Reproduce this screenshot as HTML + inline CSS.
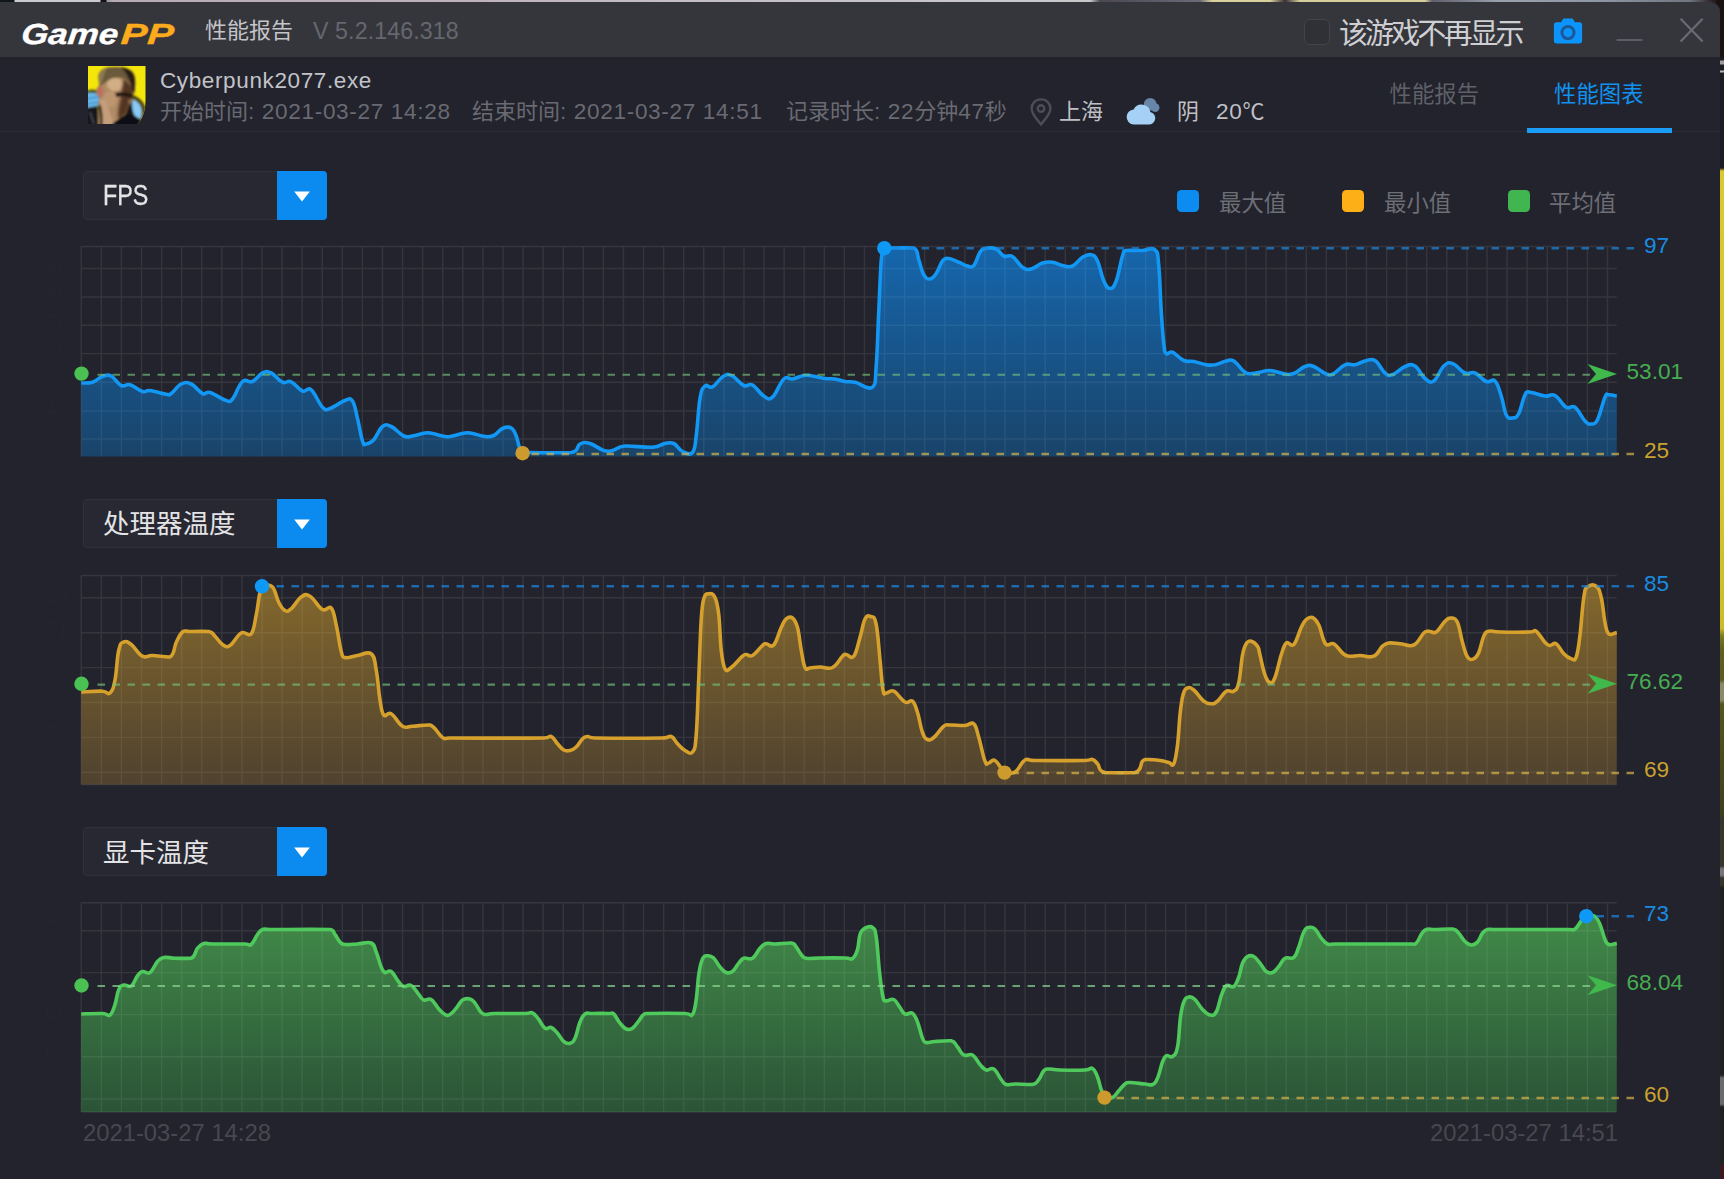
<!DOCTYPE html>
<html lang="zh-CN">
<head>
<meta charset="utf-8">
<title>GamePP 性能报告</title>
<style>
html,body{margin:0;padding:0}
body{width:1724px;height:1179px;overflow:hidden;position:relative;background:#15151a;font-family:"Liberation Sans","Noto Sans CJK SC",sans-serif;color:#c9c9ce}
#desk-top{position:absolute;left:0;top:0;width:1724px;height:3px;background:linear-gradient(90deg,#101518 0,#101518 14px,#cbcbcf 15px,#cbcbcf 100px,#121215 101px,#121215 106px,#9a979d 107px,#b9abb5 113px,#bdb0ba 420px,#c4bfc6 700px,#c9c9cc 1090px,#4a4750 1100px,#6b6a78 1200px,#d9d19c 1212px,#d9d19c 1270px,#3a3036 1285px,#d6ce9a 1300px,#d6ce9a 1425px,#60606c 1432px,#9aa1ad 1500px,#8e97a4 1600px,#70757f 1690px,#2a2225 1712px,#1a1113 1724px)}
#desk-right{position:absolute;left:1716px;top:0;width:8px;height:1179px;background:linear-gradient(180deg,#1a1113 0,#1a1113 56px,#1b1b20 58px,#1b1b20 60px,#9c9ca2 61px,#9c9ca2 64px,#1c1d22 65px,#1c1d22 70px,#b5b5ba 71px,#b5b5ba 72px,#1c1d22 73px,#1c1d22 168px,#d9c82f 171px,#d6c52e 480px,#cdbb2c 628px,#7a7a22 636px,#5e5e20 650px,#5c5c22 680px,#8a8a6a 684px,#8a8a6a 700px,#55551f 704px,#3f3f1e 814px,#36362c 820px,#36362c 866px,#77777a 869px,#77777a 875px,#36362c 878px,#34342c 885px,#1f2020 888px,#1f2020 1075px,#6a6a6e 1078px,#6a6a6e 1104px,#1f2020 1107px,#1f2020 1163px,#3a1a1e 1166px,#3a1a1e 1179px)}
#win{position:absolute;left:0;top:3px;width:1720px;height:1176px;background:#22232c;border-top-right-radius:9px;overflow:hidden;box-shadow:0 -1px 0 #35363b}
#tb{position:absolute;left:0;top:0;width:1720px;height:54px;background:#35363b}
.abs{position:absolute;white-space:nowrap;line-height:1}
#logo{left:0;top:0;font-size:29px;font-weight:bold;font-style:italic;color:#fff;-webkit-text-stroke:.4px}
#logo span,#logo b{position:absolute;top:17px;line-height:1;transform-origin:0 100%}
#logo span{left:19.8px;transform:scaleX(1.2) skewX(-5deg)}
#logo b{left:119.8px;color:#fcab1c;transform:scaleX(1.37) skewX(-3deg)}
#ttl{left:205px;top:17.3px;font-size:22px;color:#c4c4c9;font-weight:400}
#ver{left:313px;top:16.6px;font-size:23.2px;letter-spacing:.1px;color:#66676e}
#chk{position:absolute;left:1304px;top:16px;width:24px;height:24px;border:1px solid #434449;border-radius:6px;background:#303136}
#nomore{left:1339px;top:17.2px;font-size:29px;letter-spacing:-2.9px;color:#cfcfd3;font-weight:400}
#hdrline{position:absolute;left:0;top:128px;width:1720px;height:1px;background:#2b2c36}
#gname{left:160px;top:66.7px;font-size:22.5px;letter-spacing:.62px;color:#c2c3c8}
.meta{top:98.4px;font-size:22px;color:#696a72;font-weight:400}
.meta i{font-style:normal;font-size:22.6px;letter-spacing:.65px}
.lite{color:#bfc0c5}
#tab1{left:1389.500px;top:81px;font-size:22.4px;color:#5f6068;font-weight:400}
#tab2{left:1554px;top:81px;font-size:22.4px;color:#1192f0;font-weight:400}
#tabline{z-index:3;position:absolute;left:1527px;top:125px;width:145px;height:4.500px;background:#1a9cf8}
.sel{position:absolute;left:83px;width:242px;height:47px;border:1px solid #2f3039;border-radius:4px;background:#272831}
.seltxt{position:absolute;left:19px;top:8.5px;font-size:29.5px;line-height:1;color:#e4e4e7;white-space:nowrap;transform-origin:0 50%;transform:scaleX(.79);-webkit-text-stroke:.3px}
.seltxt.cjk{font-size:26.5px;top:11.5px;font-weight:400;transform:none;-webkit-text-stroke:0}
.selbtn{position:absolute;left:193px;top:-1px;width:50px;height:49px;background:#0b8bef;border-radius:0 4px 4px 0}
.selbtn svg{position:absolute;left:0;top:0}
.lg{position:absolute;width:22px;height:22px;border-radius:4.5px;top:187px}
.lgt{top:190.2px;font-size:22.4px;color:#6d6e76;font-weight:400}
#charts{position:absolute;left:0;top:0}
#charts .grid{fill:none;stroke:rgba(255,255,255,0.088);stroke-width:1.4}
#charts .grid2{fill:none;stroke:rgba(255,255,255,0.06);stroke-width:1.4}
#charts .dash{fill:none;stroke-width:2.4;stroke-dasharray:7.5 7.5;stroke-opacity:.72}
#charts text{font-family:"Liberation Sans","Noto Sans CJK SC",sans-serif}
#charts .yl{font-size:22px;fill:#24252e;text-anchor:end}
#charts .vl{font-size:22.6px}
#charts .dl{font-size:23.8px;fill:#474851}
</style>
</head>
<body>
<div id="desk-top"></div>
<div id="desk-right"></div>
<div id="win">
<div id="tb">
<div id="logo" class="abs"><span>Game</span><b>PP</b></div>
<div id="ttl" class="abs">性能报告</div>
<div id="ver" class="abs">V 5.2.146.318</div>
<div id="chk"></div>
<div id="nomore" class="abs">该游戏不再显示</div>
<svg class="abs" style="left:1553px;top:14px" width="30" height="28" viewBox="0 0 30 28"><path d="M10.400 1.500h9.200l2.300 3.700h4.500a2.700 2.700 0 0 1 2.700 2.700v15.800a2.700 2.700 0 0 1-2.700 2.700H3.600A2.700 2.700 0 0 1 .9 23.700V7.900a2.700 2.700 0 0 1 2.700-2.700h4.500z" fill="#0c94fd"/><circle cx="15" cy="15.600" r="6.100" fill="none" stroke="#1d5896" stroke-width="3"/></svg>
<svg class="abs" style="left:1615px;top:33px" width="30" height="8" viewBox="0 0 30 8"><path d="M1.500 4H27.500" stroke="#5c5d64" stroke-width="1.800"/></svg>
<svg class="abs" style="left:1678px;top:14px" width="28" height="28" viewBox="0 0 28 28"><path d="M2.600 1.800L24.600 24.600M24.600 1.800L2.600 24.600" stroke="#6b6a72" stroke-width="2.200" fill="none"/></svg>
</div>
<svg class="abs" style="left:88px;top:63.3px" width="58" height="58" viewBox="0 0 58 58">
<defs><clipPath id="icp"><path d="M0 0H57.500V34C57.500 44 55 52 49.500 58H0Z"/></clipPath><filter id="ibl" x="-10%" y="-10%" width="120%" height="120%"><feGaussianBlur stdDeviation="1.05"/></filter></defs>
<g clip-path="url(#icp)">
<rect x="-2" y="-2" width="62" height="62" fill="#f4e60a"/>
<g filter="url(#ibl)">
<path d="M44 29C50 30.500 55 35 57.500 42L60 60H40Z" fill="#6a5a1c"/>
<path d="M-2 25C3 22.500 8 23 12 26.500L12 40L-2 44Z" fill="#4a5222"/>
<path d="M-2 27.500C3 26 7 26.500 10.300 29C11.500 32.500 11 36.500 9 41L-2 43.500Z" fill="#6cb9e8"/>
<path d="M-2 33L11 30.500M-2 38.500L10 36" stroke="#3f92cc" stroke-width="1.500" fill="none"/>
<path d="M-2 42L9 40C10.500 45 11 52 10.500 60H-2Z" fill="#17171d"/>
<path d="M2 46L6 58" stroke="#4a4a52" stroke-width="1.600" fill="none"/>
<path d="M10.500 12C10 6 14 2.500 20 1.500C28 .3 38 1 43 4.500C46.500 7.500 47.500 13 47.200 19C47 23 46.600 25 46.400 26L44 31L42.700 34.800L43.500 37L41 39.500L40.300 41L39.500 44.500L38 48L34 51L29 53.500L27 60H10.300V40L11.500 31L8.400 28V22L11 20Z" fill="#b08b66"/>
<path d="M10.500 12C10 6 14 2.500 20 1.500C28 .3 38 1 43 4.500C46.500 7.500 47.500 13 47.200 19L46.400 26C45 20 42 15 36 12.500C30 10.500 24 11.500 19 15C15.500 18 13 20 11.500 21.500Z" fill="#6b5a3a"/>
<path d="M11 11C11 6.500 14 3 19 1.800C17 6 15 11 13.500 17.500L11.500 21Z" fill="#8f7a54"/>
<path d="M33 1.500C38 1.500 43 4 45.500 8C47.500 12 47.500 19 46.400 26L43.500 24C43 17 40 8 33 1.500Z" fill="#2c1e17"/>
<ellipse cx="27" cy="18.500" rx="8" ry="6.500" fill="#d2ae84"/>
<ellipse cx="22" cy="33" rx="7" ry="8" fill="#bd9670"/>
<path filter="url(#ibl)" d="M36 13C40 15 44 20 46 26L44 31L42.700 34.800L43.500 37L41 39.500L40.300 41L39.500 44.500L38 48L34 51L30 53C29.500 46 31 38 33 31C33.500 25 34.500 18 36 13Z" fill="#432719" fill-opacity=".85"/>
<path d="M27 27C32 25.500 38 26 44.800 28.500L44 32C39 30 33 30 28.500 31Z" fill="#22160f"/>
<path d="M40 33.500L43 34.500L43.600 37L41.200 38.500Z" fill="#9a7050"/>
<ellipse cx="12" cy="25.500" rx="3.400" ry="5.200" fill="#bb705b"/>
<path d="M11.500 33C13 40 13.500 48 13 60H26C24 50 20 41 17.500 34Z" fill="#c49e7a"/>
<path d="M9.800 40C11.500 46 12.300 52 12 60H14.500C15 52 14.500 45 12.800 39Z" fill="#33261f"/>
<path d="M23 60C26 55.500 32 52 37 49L41 44.500L44 41L46 49L53 54L52 60Z" fill="#0f0f15"/>
<path d="M40.500 40.500L44.500 35L47 50L38 48.500Z" fill="#151218"/>
<path d="M44.500 33.500C48.500 34.500 52 38 53.300 43C54 47 53.500 50 52 53L46.500 49.500C44.300 45 43.600 39 44.500 33.500Z" fill="#88caf5"/>
<path d="M44.500 30.500C50 32 55 36.500 56.500 43C57.500 48 56 54 52 59" fill="none" stroke="#3a3416" stroke-width="2"/>
</g></g></svg>
<div id="gname" class="abs">Cyberpunk2077.exe</div>
<div class="abs meta" style="left:160px" id="m1">开始时间<i>: 2021-03-27 14:28</i></div>
<div class="abs meta" style="left:472px" id="m2">结束时间<i>: 2021-03-27 14:51</i></div>
<div class="abs meta" style="left:786px" id="m3">记录时长<i>: 22</i>分钟<i>47</i>秒</div>
<svg class="abs" style="left:1029px;top:94px" width="24" height="30" viewBox="0 0 24 30"><path d="M12 2.400C6.300 2.400 2.600 6.400 2.600 11.400C2.600 17.500 8.600 22.600 12 27.600C15.400 22.600 21.400 17.500 21.400 11.400C21.400 6.400 17.700 2.400 12 2.400Z" fill="none" stroke="#4c4d56" stroke-width="2.400" stroke-linejoin="round"/><circle cx="12" cy="11.600" r="3.300" fill="none" stroke="#4c4d56" stroke-width="2.400"/></svg>
<div class="abs meta lite" style="left:1059px" id="m4">上海</div>
<svg class="abs" style="left:1124px;top:91px" width="38" height="34" viewBox="0 0 38 34"><circle cx="26.200" cy="10.200" r="6.300" fill="#6887a8"/><circle cx="31.200" cy="13.600" r="4.300" fill="#6887a8"/><path d="M9.200 30.500H24.800A6.400 6.400 0 0 0 26.400 17.900A9 9 0 0 0 9.600 15.400A7.600 7.600 0 0 0 9.200 30.500Z" fill="#a5d1f7"/></svg>
<div class="abs meta lite" style="left:1177px" id="m5">阴</div>
<div class="abs meta lite" style="left:1216px" id="m6"><i>20</i>℃</div>
<div id="tab1" class="abs">性能报告</div>
<div id="tab2" class="abs">性能图表</div>
<div id="tabline"></div>
<div id="hdrline"></div>
<div class="sel" style="top:167.5px"><span class="seltxt ">FPS</span><span class="selbtn"><svg width="50" height="50" viewBox="0 0 50 50"><path d="M17.2 20.6H32.8L25 30.6Z" fill="#fff"/></svg></span></div>
<div class="sel" style="top:495.6px"><span class="seltxt cjk">处理器温度</span><span class="selbtn"><svg width="50" height="50" viewBox="0 0 50 50"><path d="M17.2 20.6H32.8L25 30.6Z" fill="#fff"/></svg></span></div>
<div class="sel" style="top:824.2px"><span class="seltxt cjk">显卡温度</span><span class="selbtn"><svg width="50" height="50" viewBox="0 0 50 50"><path d="M17.2 20.6H32.8L25 30.6Z" fill="#fff"/></svg></span></div>
<div class="lg" style="left:1177px;background:#0c8cf0"></div><div class="abs lgt" style="left:1219px">最大值</div>
<div class="lg" style="left:1342px;background:#fcaf17"></div><div class="abs lgt" style="left:1384px">最小值</div>
<div class="lg" style="left:1508px;background:#41b650"></div><div class="abs lgt" style="left:1549px">平均值</div>
</div>
<svg id="charts" width="1724" height="1179" viewBox="0 0 1724 1179">
<defs>
<linearGradient id="gc1" x1="0" y1="0" x2="0" y2="1"><stop offset="0" stop-color="#146ebb" stop-opacity="0.9"/><stop offset="1" stop-color="#184872" stop-opacity="0.88"/></linearGradient>
<linearGradient id="gc2" x1="0" y1="0" x2="0" y2="1"><stop offset="0" stop-color="#8e6f2c" stop-opacity="0.9"/><stop offset="1" stop-color="#55462f" stop-opacity="0.88"/></linearGradient>
<linearGradient id="gc3" x1="0" y1="0" x2="0" y2="1"><stop offset="0" stop-color="#45964c" stop-opacity="0.9"/><stop offset="1" stop-color="#2c5a38" stop-opacity="0.88"/></linearGradient>
</defs>
<g class="chart" id="c1">
<text class="yl" x="69" y="273.0">90</text>
<text class="yl" x="69" y="301.5">80</text>
<text class="yl" x="69" y="329.7">70</text>
<text class="yl" x="69" y="358.1">60</text>
<text class="yl" x="69" y="386.7">50</text>
<text class="yl" x="69" y="415.5">40</text>
<text class="yl" x="69" y="443.5">30</text>
<path class="grid" d="M81.25 246.5V456.5M101.33 246.5V456.5M121.41 246.5V456.5M141.50 246.5V456.5M161.58 246.5V456.5M181.66 246.5V456.5M201.74 246.5V456.5M221.82 246.5V456.5M241.91 246.5V456.5M261.99 246.5V456.5M282.07 246.5V456.5M302.15 246.5V456.5M322.23 246.5V456.5M342.32 246.5V456.5M362.40 246.5V456.5M382.48 246.5V456.5M402.56 246.5V456.5M422.64 246.5V456.5M442.73 246.5V456.5M462.81 246.5V456.5M482.89 246.5V456.5M502.97 246.5V456.5M523.05 246.5V456.5M543.14 246.5V456.5M563.22 246.5V456.5M583.30 246.5V456.5M603.38 246.5V456.5M623.46 246.5V456.5M643.55 246.5V456.5M663.63 246.5V456.5M683.71 246.5V456.5M703.79 246.5V456.5M723.87 246.5V456.5M743.96 246.5V456.5M764.04 246.5V456.5M784.12 246.5V456.5M804.20 246.5V456.5M824.28 246.5V456.5M844.37 246.5V456.5M864.45 246.5V456.5M884.53 246.5V456.5M904.61 246.5V456.5M924.69 246.5V456.5M944.78 246.5V456.5M964.86 246.5V456.5M984.94 246.5V456.5M1005.02 246.5V456.5M1025.10 246.5V456.5M1045.19 246.5V456.5M1065.27 246.5V456.5M1085.35 246.5V456.5M1105.43 246.5V456.5M1125.51 246.5V456.5M1145.60 246.5V456.5M1165.68 246.5V456.5M1185.76 246.5V456.5M1205.84 246.5V456.5M1225.92 246.5V456.5M1246.01 246.5V456.5M1266.09 246.5V456.5M1286.17 246.5V456.5M1306.25 246.5V456.5M1326.33 246.5V456.5M1346.42 246.5V456.5M1366.50 246.5V456.5M1386.58 246.5V456.5M1406.66 246.5V456.5M1426.74 246.5V456.5M1446.83 246.5V456.5M1466.91 246.5V456.5M1486.99 246.5V456.5M1507.07 246.5V456.5M1527.15 246.5V456.5M1547.24 246.5V456.5M1567.32 246.5V456.5M1587.40 246.5V456.5M1607.48 246.5V456.5M81.25 246.50H1616.75M81.25 268.50H1616.75M81.25 297.00H1616.75M81.25 325.20H1616.75M81.25 353.60H1616.75M81.25 382.20H1616.75M81.25 411.00H1616.75M81.25 439.00H1616.75"/>
<clipPath id="cpc1"><path d="M81.2 383.0C83.6 382.8 88.1 383.6 92.5 382.2C96.9 380.9 98.6 377.8 102.5 376.5C106.4 375.2 107.4 374.1 111.2 376.0C115.1 377.9 117.4 383.7 121.2 385.5C125.1 387.3 125.6 383.5 130.0 384.8C134.4 386.0 138.4 390.3 142.5 391.5C146.6 392.7 145.1 389.9 150.0 390.5C154.9 391.1 161.9 393.6 166.2 394.2C170.6 394.9 168.2 395.6 171.2 393.5C174.3 391.4 177.1 386.0 181.2 384.0C185.4 382.0 186.9 382.0 191.2 384.0C195.6 386.0 198.6 391.7 202.5 393.5C206.4 395.3 205.1 391.1 210.0 392.5C214.9 393.9 221.6 399.2 226.2 400.5C230.9 401.8 229.1 402.9 232.5 399.0C235.9 395.1 238.4 385.1 242.5 381.5C246.6 377.9 248.4 383.3 252.5 381.5C256.6 379.7 258.6 374.8 262.5 373.0C266.4 371.2 267.1 371.1 271.2 373.0C275.4 374.9 278.4 380.4 282.5 382.2C286.6 384.1 287.1 379.9 291.2 381.8C295.4 383.6 298.4 389.3 302.5 391.0C306.6 392.7 307.1 386.4 311.2 389.8C315.4 393.1 318.6 403.4 322.5 407.2C326.4 411.1 325.4 409.9 330.0 408.5C334.6 407.1 340.4 402.1 345.0 400.5C349.6 398.9 349.9 397.3 352.5 401.0C355.1 404.7 355.4 410.2 357.5 418.5C359.6 426.8 360.7 435.7 362.5 441.0C364.3 446.3 363.9 444.3 366.2 444.0C368.6 443.7 370.4 443.4 373.8 439.8C377.1 436.1 378.9 429.2 382.5 426.5C386.1 423.8 386.9 424.5 391.2 426.5C395.6 428.5 399.4 434.0 403.8 436.0C408.1 438.0 408.1 436.6 412.5 436.0C416.9 435.4 420.9 433.5 425.0 433.0C429.1 432.5 428.4 432.8 432.5 433.5C436.6 434.2 440.9 436.0 445.0 436.5C449.1 437.0 448.4 436.7 452.5 436.0C456.6 435.3 460.9 433.5 465.0 433.0C469.1 432.5 468.4 432.8 472.5 433.5C476.6 434.2 480.6 436.1 485.0 436.5C489.4 436.9 490.1 437.2 493.8 435.5C497.4 433.8 498.9 430.1 502.5 428.5C506.1 426.9 508.4 426.4 511.2 428.0C514.1 429.6 514.2 431.2 516.2 436.0C518.3 440.8 518.4 447.6 521.2 451.0C524.1 454.4 521.2 452.2 530.0 452.5C540.3 452.8 560.9 452.8 571.2 452.5C580.0 450.7 576.1 445.9 580.0 444.0C583.9 442.1 585.1 442.2 590.0 443.5C594.9 444.8 599.1 449.1 603.8 450.5C608.4 451.9 608.1 451.4 612.5 450.5C616.9 449.6 616.7 446.7 625.0 446.0C633.3 445.7 644.2 447.6 652.5 447.2C660.8 446.7 660.6 444.3 665.0 443.5C669.4 442.7 670.1 441.8 673.8 443.5C677.4 445.2 678.6 449.6 682.5 451.5C686.4 453.4 689.7 455.7 692.5 452.5C695.3 449.3 694.7 447.2 696.2 436.0C697.8 424.8 698.2 408.8 700.0 398.5C701.8 388.2 702.4 388.4 705.0 386.0C707.6 383.6 708.6 388.8 712.5 386.8C716.4 384.7 719.6 378.2 723.8 376.0C727.9 373.8 728.4 374.0 732.5 376.0C736.6 378.0 739.6 383.6 743.8 385.5C747.9 387.4 748.4 382.8 752.5 385.0C756.6 387.2 759.6 393.5 763.8 396.0C767.9 398.5 768.4 400.8 772.5 397.2C776.6 393.7 779.6 382.8 783.8 379.0C787.9 375.2 788.4 379.7 792.5 379.0C796.6 378.3 799.6 376.1 803.8 375.5C807.9 374.9 808.1 375.4 812.5 376.0C816.9 376.6 820.4 377.9 825.0 378.5C829.6 379.1 830.9 378.4 835.0 379.0C839.1 379.6 840.9 380.8 845.0 381.5C849.1 382.2 849.3 381.1 855.0 382.2C860.7 383.4 868.1 390.6 872.5 387.2C876.2 383.9 875.0 381.8 876.2 366.0C877.5 350.2 877.7 332.7 878.8 311.0C879.8 289.3 880.2 274.0 881.2 261.0C882.3 248.0 883.0 250.7 883.8 248.0C884.5 245.3 883.8 248.0 885.0 248.0C891.2 248.0 906.8 247.7 913.8 248.0C918.8 250.4 916.7 254.2 918.8 259.8C920.8 265.3 921.4 270.8 923.8 274.8C926.1 278.7 927.4 279.3 930.0 279.0C932.6 278.7 933.7 277.2 936.2 273.5C938.8 269.8 939.9 264.1 942.5 261.0C945.1 257.9 945.4 258.2 948.8 258.5C952.1 258.8 954.9 260.7 958.8 262.2C962.6 263.8 964.4 265.3 967.5 266.0C970.6 266.7 971.2 268.3 973.8 265.5C976.3 262.7 977.7 255.8 980.0 252.2C982.3 248.7 981.6 249.2 985.0 248.5C988.4 247.8 992.4 247.4 996.2 249.0C1000.1 250.6 1000.4 254.4 1003.8 256.0C1007.1 257.6 1008.6 254.2 1012.5 256.5C1016.4 258.8 1018.6 264.7 1022.5 267.2C1026.4 269.8 1027.1 269.9 1031.2 269.0C1035.4 268.1 1038.1 264.4 1042.5 263.0C1046.9 261.6 1048.4 261.7 1052.5 262.2C1056.6 262.8 1058.4 264.7 1062.5 265.5C1066.6 266.3 1068.4 267.7 1072.5 266.0C1076.6 264.3 1078.6 259.6 1082.5 257.2C1086.4 254.9 1088.2 254.0 1091.2 254.8C1094.3 255.5 1094.9 255.6 1097.5 261.0C1100.1 266.4 1101.2 275.3 1103.8 281.0C1106.3 286.7 1107.4 288.5 1110.0 288.5C1112.6 288.5 1113.7 287.7 1116.2 281.0C1118.8 274.3 1120.4 262.3 1122.5 256.0C1124.6 249.7 1122.5 251.6 1126.2 250.5C1130.4 250.2 1136.6 250.7 1142.5 250.5C1148.4 250.3 1151.6 246.5 1155.0 249.8C1158.4 253.0 1157.5 253.3 1158.8 266.0C1160.0 278.7 1160.2 295.0 1161.2 311.0C1162.3 327.0 1162.7 334.7 1163.8 343.5C1164.8 352.3 1164.4 351.7 1166.2 353.5C1168.1 355.3 1168.9 350.8 1172.5 352.2C1176.1 353.7 1179.4 358.6 1183.8 360.5C1188.1 362.4 1189.1 360.6 1193.8 361.5C1198.4 362.4 1201.9 364.1 1206.2 364.8C1210.6 365.4 1210.9 365.5 1215.0 364.8C1219.1 364.0 1222.4 361.8 1226.2 361.0C1230.1 360.2 1229.9 358.7 1233.8 361.0C1237.6 363.3 1241.1 369.7 1245.0 372.2C1248.9 374.8 1249.4 373.5 1252.5 373.5C1255.6 373.5 1256.4 372.9 1260.0 372.2C1263.6 371.6 1264.8 370.1 1270.0 370.5C1275.2 370.9 1280.1 373.4 1285.0 374.0C1289.9 374.6 1289.6 375.1 1293.8 373.5C1297.9 371.9 1300.9 367.9 1305.0 366.5C1309.1 365.1 1309.4 364.9 1313.8 366.5C1318.1 368.1 1322.1 372.6 1326.2 374.0C1330.4 375.4 1329.9 375.4 1333.8 373.5C1337.6 371.6 1340.6 366.6 1345.0 364.8C1349.4 362.9 1350.9 365.5 1355.0 364.8C1359.1 364.0 1360.9 361.9 1365.0 361.0C1369.1 360.1 1370.9 358.0 1375.0 360.5C1379.1 363.0 1381.4 370.1 1385.0 373.0C1388.6 375.9 1388.4 376.1 1392.5 374.8C1396.6 373.4 1400.3 368.3 1405.0 366.5C1409.7 364.7 1410.9 363.5 1415.0 366.0C1419.1 368.5 1421.1 375.4 1425.0 378.5C1428.9 381.6 1429.9 383.6 1433.8 381.0C1437.6 378.4 1439.9 369.6 1443.8 366.0C1447.6 362.4 1448.1 362.1 1452.5 363.5C1456.9 364.9 1460.3 371.0 1465.0 373.0C1469.7 375.0 1470.6 371.2 1475.0 373.0C1479.4 374.8 1482.1 379.8 1486.2 381.5C1490.4 383.2 1491.9 378.0 1495.0 381.0C1498.1 384.0 1498.9 389.0 1501.2 396.0C1503.6 403.0 1503.9 410.2 1506.2 414.8C1508.6 419.3 1509.9 418.3 1512.5 418.0C1515.1 417.7 1516.2 418.3 1518.8 413.5C1521.3 408.7 1522.7 399.1 1525.0 394.8C1527.3 390.4 1525.9 392.0 1530.0 392.2C1534.1 392.5 1539.8 395.3 1545.0 396.0C1550.2 396.7 1550.6 393.2 1555.0 395.5C1559.4 397.8 1562.1 404.8 1566.2 407.2C1570.4 409.7 1571.1 404.4 1575.0 407.2C1578.9 410.1 1581.6 417.5 1585.0 421.0C1588.4 424.5 1588.7 424.3 1591.2 424.0C1593.8 423.7 1594.7 425.3 1597.5 419.8C1600.3 414.2 1602.7 402.4 1605.0 397.2C1607.3 392.1 1606.3 395.0 1608.8 394.8C1611.2 394.5 1615.1 395.7 1616.8 396.0L1616.75 456.5L81.25 456.5Z"/></clipPath>
<path d="M81.2 383.0C83.6 382.8 88.1 383.6 92.5 382.2C96.9 380.9 98.6 377.8 102.5 376.5C106.4 375.2 107.4 374.1 111.2 376.0C115.1 377.9 117.4 383.7 121.2 385.5C125.1 387.3 125.6 383.5 130.0 384.8C134.4 386.0 138.4 390.3 142.5 391.5C146.6 392.7 145.1 389.9 150.0 390.5C154.9 391.1 161.9 393.6 166.2 394.2C170.6 394.9 168.2 395.6 171.2 393.5C174.3 391.4 177.1 386.0 181.2 384.0C185.4 382.0 186.9 382.0 191.2 384.0C195.6 386.0 198.6 391.7 202.5 393.5C206.4 395.3 205.1 391.1 210.0 392.5C214.9 393.9 221.6 399.2 226.2 400.5C230.9 401.8 229.1 402.9 232.5 399.0C235.9 395.1 238.4 385.1 242.5 381.5C246.6 377.9 248.4 383.3 252.5 381.5C256.6 379.7 258.6 374.8 262.5 373.0C266.4 371.2 267.1 371.1 271.2 373.0C275.4 374.9 278.4 380.4 282.5 382.2C286.6 384.1 287.1 379.9 291.2 381.8C295.4 383.6 298.4 389.3 302.5 391.0C306.6 392.7 307.1 386.4 311.2 389.8C315.4 393.1 318.6 403.4 322.5 407.2C326.4 411.1 325.4 409.9 330.0 408.5C334.6 407.1 340.4 402.1 345.0 400.5C349.6 398.9 349.9 397.3 352.5 401.0C355.1 404.7 355.4 410.2 357.5 418.5C359.6 426.8 360.7 435.7 362.5 441.0C364.3 446.3 363.9 444.3 366.2 444.0C368.6 443.7 370.4 443.4 373.8 439.8C377.1 436.1 378.9 429.2 382.5 426.5C386.1 423.8 386.9 424.5 391.2 426.5C395.6 428.5 399.4 434.0 403.8 436.0C408.1 438.0 408.1 436.6 412.5 436.0C416.9 435.4 420.9 433.5 425.0 433.0C429.1 432.5 428.4 432.8 432.5 433.5C436.6 434.2 440.9 436.0 445.0 436.5C449.1 437.0 448.4 436.7 452.5 436.0C456.6 435.3 460.9 433.5 465.0 433.0C469.1 432.5 468.4 432.8 472.5 433.5C476.6 434.2 480.6 436.1 485.0 436.5C489.4 436.9 490.1 437.2 493.8 435.5C497.4 433.8 498.9 430.1 502.5 428.5C506.1 426.9 508.4 426.4 511.2 428.0C514.1 429.6 514.2 431.2 516.2 436.0C518.3 440.8 518.4 447.6 521.2 451.0C524.1 454.4 521.2 452.2 530.0 452.5C540.3 452.8 560.9 452.8 571.2 452.5C580.0 450.7 576.1 445.9 580.0 444.0C583.9 442.1 585.1 442.2 590.0 443.5C594.9 444.8 599.1 449.1 603.8 450.5C608.4 451.9 608.1 451.4 612.5 450.5C616.9 449.6 616.7 446.7 625.0 446.0C633.3 445.7 644.2 447.6 652.5 447.2C660.8 446.7 660.6 444.3 665.0 443.5C669.4 442.7 670.1 441.8 673.8 443.5C677.4 445.2 678.6 449.6 682.5 451.5C686.4 453.4 689.7 455.7 692.5 452.5C695.3 449.3 694.7 447.2 696.2 436.0C697.8 424.8 698.2 408.8 700.0 398.5C701.8 388.2 702.4 388.4 705.0 386.0C707.6 383.6 708.6 388.8 712.5 386.8C716.4 384.7 719.6 378.2 723.8 376.0C727.9 373.8 728.4 374.0 732.5 376.0C736.6 378.0 739.6 383.6 743.8 385.5C747.9 387.4 748.4 382.8 752.5 385.0C756.6 387.2 759.6 393.5 763.8 396.0C767.9 398.5 768.4 400.8 772.5 397.2C776.6 393.7 779.6 382.8 783.8 379.0C787.9 375.2 788.4 379.7 792.5 379.0C796.6 378.3 799.6 376.1 803.8 375.5C807.9 374.9 808.1 375.4 812.5 376.0C816.9 376.6 820.4 377.9 825.0 378.5C829.6 379.1 830.9 378.4 835.0 379.0C839.1 379.6 840.9 380.8 845.0 381.5C849.1 382.2 849.3 381.1 855.0 382.2C860.7 383.4 868.1 390.6 872.5 387.2C876.2 383.9 875.0 381.8 876.2 366.0C877.5 350.2 877.7 332.7 878.8 311.0C879.8 289.3 880.2 274.0 881.2 261.0C882.3 248.0 883.0 250.7 883.8 248.0C884.5 245.3 883.8 248.0 885.0 248.0C891.2 248.0 906.8 247.7 913.8 248.0C918.8 250.4 916.7 254.2 918.8 259.8C920.8 265.3 921.4 270.8 923.8 274.8C926.1 278.7 927.4 279.3 930.0 279.0C932.6 278.7 933.7 277.2 936.2 273.5C938.8 269.8 939.9 264.1 942.5 261.0C945.1 257.9 945.4 258.2 948.8 258.5C952.1 258.8 954.9 260.7 958.8 262.2C962.6 263.8 964.4 265.3 967.5 266.0C970.6 266.7 971.2 268.3 973.8 265.5C976.3 262.7 977.7 255.8 980.0 252.2C982.3 248.7 981.6 249.2 985.0 248.5C988.4 247.8 992.4 247.4 996.2 249.0C1000.1 250.6 1000.4 254.4 1003.8 256.0C1007.1 257.6 1008.6 254.2 1012.5 256.5C1016.4 258.8 1018.6 264.7 1022.5 267.2C1026.4 269.8 1027.1 269.9 1031.2 269.0C1035.4 268.1 1038.1 264.4 1042.5 263.0C1046.9 261.6 1048.4 261.7 1052.5 262.2C1056.6 262.8 1058.4 264.7 1062.5 265.5C1066.6 266.3 1068.4 267.7 1072.5 266.0C1076.6 264.3 1078.6 259.6 1082.5 257.2C1086.4 254.9 1088.2 254.0 1091.2 254.8C1094.3 255.5 1094.9 255.6 1097.5 261.0C1100.1 266.4 1101.2 275.3 1103.8 281.0C1106.3 286.7 1107.4 288.5 1110.0 288.5C1112.6 288.5 1113.7 287.7 1116.2 281.0C1118.8 274.3 1120.4 262.3 1122.5 256.0C1124.6 249.7 1122.5 251.6 1126.2 250.5C1130.4 250.2 1136.6 250.7 1142.5 250.5C1148.4 250.3 1151.6 246.5 1155.0 249.8C1158.4 253.0 1157.5 253.3 1158.8 266.0C1160.0 278.7 1160.2 295.0 1161.2 311.0C1162.3 327.0 1162.7 334.7 1163.8 343.5C1164.8 352.3 1164.4 351.7 1166.2 353.5C1168.1 355.3 1168.9 350.8 1172.5 352.2C1176.1 353.7 1179.4 358.6 1183.8 360.5C1188.1 362.4 1189.1 360.6 1193.8 361.5C1198.4 362.4 1201.9 364.1 1206.2 364.8C1210.6 365.4 1210.9 365.5 1215.0 364.8C1219.1 364.0 1222.4 361.8 1226.2 361.0C1230.1 360.2 1229.9 358.7 1233.8 361.0C1237.6 363.3 1241.1 369.7 1245.0 372.2C1248.9 374.8 1249.4 373.5 1252.5 373.5C1255.6 373.5 1256.4 372.9 1260.0 372.2C1263.6 371.6 1264.8 370.1 1270.0 370.5C1275.2 370.9 1280.1 373.4 1285.0 374.0C1289.9 374.6 1289.6 375.1 1293.8 373.5C1297.9 371.9 1300.9 367.9 1305.0 366.5C1309.1 365.1 1309.4 364.9 1313.8 366.5C1318.1 368.1 1322.1 372.6 1326.2 374.0C1330.4 375.4 1329.9 375.4 1333.8 373.5C1337.6 371.6 1340.6 366.6 1345.0 364.8C1349.4 362.9 1350.9 365.5 1355.0 364.8C1359.1 364.0 1360.9 361.9 1365.0 361.0C1369.1 360.1 1370.9 358.0 1375.0 360.5C1379.1 363.0 1381.4 370.1 1385.0 373.0C1388.6 375.9 1388.4 376.1 1392.5 374.8C1396.6 373.4 1400.3 368.3 1405.0 366.5C1409.7 364.7 1410.9 363.5 1415.0 366.0C1419.1 368.5 1421.1 375.4 1425.0 378.5C1428.9 381.6 1429.9 383.6 1433.8 381.0C1437.6 378.4 1439.9 369.6 1443.8 366.0C1447.6 362.4 1448.1 362.1 1452.5 363.5C1456.9 364.9 1460.3 371.0 1465.0 373.0C1469.7 375.0 1470.6 371.2 1475.0 373.0C1479.4 374.8 1482.1 379.8 1486.2 381.5C1490.4 383.2 1491.9 378.0 1495.0 381.0C1498.1 384.0 1498.9 389.0 1501.2 396.0C1503.6 403.0 1503.9 410.2 1506.2 414.8C1508.6 419.3 1509.9 418.3 1512.5 418.0C1515.1 417.7 1516.2 418.3 1518.8 413.5C1521.3 408.7 1522.7 399.1 1525.0 394.8C1527.3 390.4 1525.9 392.0 1530.0 392.2C1534.1 392.5 1539.8 395.3 1545.0 396.0C1550.2 396.7 1550.6 393.2 1555.0 395.5C1559.4 397.8 1562.1 404.8 1566.2 407.2C1570.4 409.7 1571.1 404.4 1575.0 407.2C1578.9 410.1 1581.6 417.5 1585.0 421.0C1588.4 424.5 1588.7 424.3 1591.2 424.0C1593.8 423.7 1594.7 425.3 1597.5 419.8C1600.3 414.2 1602.7 402.4 1605.0 397.2C1607.3 392.1 1606.3 395.0 1608.8 394.8C1611.2 394.5 1615.1 395.7 1616.8 396.0L1616.75 456.5L81.25 456.5Z" fill="url(#gc1)"/>
<path class="grid2" clip-path="url(#cpc1)" d="M81.25 246.5V456.5M101.33 246.5V456.5M121.41 246.5V456.5M141.50 246.5V456.5M161.58 246.5V456.5M181.66 246.5V456.5M201.74 246.5V456.5M221.82 246.5V456.5M241.91 246.5V456.5M261.99 246.5V456.5M282.07 246.5V456.5M302.15 246.5V456.5M322.23 246.5V456.5M342.32 246.5V456.5M362.40 246.5V456.5M382.48 246.5V456.5M402.56 246.5V456.5M422.64 246.5V456.5M442.73 246.5V456.5M462.81 246.5V456.5M482.89 246.5V456.5M502.97 246.5V456.5M523.05 246.5V456.5M543.14 246.5V456.5M563.22 246.5V456.5M583.30 246.5V456.5M603.38 246.5V456.5M623.46 246.5V456.5M643.55 246.5V456.5M663.63 246.5V456.5M683.71 246.5V456.5M703.79 246.5V456.5M723.87 246.5V456.5M743.96 246.5V456.5M764.04 246.5V456.5M784.12 246.5V456.5M804.20 246.5V456.5M824.28 246.5V456.5M844.37 246.5V456.5M864.45 246.5V456.5M884.53 246.5V456.5M904.61 246.5V456.5M924.69 246.5V456.5M944.78 246.5V456.5M964.86 246.5V456.5M984.94 246.5V456.5M1005.02 246.5V456.5M1025.10 246.5V456.5M1045.19 246.5V456.5M1065.27 246.5V456.5M1085.35 246.5V456.5M1105.43 246.5V456.5M1125.51 246.5V456.5M1145.60 246.5V456.5M1165.68 246.5V456.5M1185.76 246.5V456.5M1205.84 246.5V456.5M1225.92 246.5V456.5M1246.01 246.5V456.5M1266.09 246.5V456.5M1286.17 246.5V456.5M1306.25 246.5V456.5M1326.33 246.5V456.5M1346.42 246.5V456.5M1366.50 246.5V456.5M1386.58 246.5V456.5M1406.66 246.5V456.5M1426.74 246.5V456.5M1446.83 246.5V456.5M1466.91 246.5V456.5M1486.99 246.5V456.5M1507.07 246.5V456.5M1527.15 246.5V456.5M1547.24 246.5V456.5M1567.32 246.5V456.5M1587.40 246.5V456.5M1607.48 246.5V456.5M81.25 246.50H1616.75M81.25 268.50H1616.75M81.25 297.00H1616.75M81.25 325.20H1616.75M81.25 353.60H1616.75M81.25 382.20H1616.75M81.25 411.00H1616.75M81.25 439.00H1616.75"/>
<path d="M81.2 383.0C83.6 382.8 88.1 383.6 92.5 382.2C96.9 380.9 98.6 377.8 102.5 376.5C106.4 375.2 107.4 374.1 111.2 376.0C115.1 377.9 117.4 383.7 121.2 385.5C125.1 387.3 125.6 383.5 130.0 384.8C134.4 386.0 138.4 390.3 142.5 391.5C146.6 392.7 145.1 389.9 150.0 390.5C154.9 391.1 161.9 393.6 166.2 394.2C170.6 394.9 168.2 395.6 171.2 393.5C174.3 391.4 177.1 386.0 181.2 384.0C185.4 382.0 186.9 382.0 191.2 384.0C195.6 386.0 198.6 391.7 202.5 393.5C206.4 395.3 205.1 391.1 210.0 392.5C214.9 393.9 221.6 399.2 226.2 400.5C230.9 401.8 229.1 402.9 232.5 399.0C235.9 395.1 238.4 385.1 242.5 381.5C246.6 377.9 248.4 383.3 252.5 381.5C256.6 379.7 258.6 374.8 262.5 373.0C266.4 371.2 267.1 371.1 271.2 373.0C275.4 374.9 278.4 380.4 282.5 382.2C286.6 384.1 287.1 379.9 291.2 381.8C295.4 383.6 298.4 389.3 302.5 391.0C306.6 392.7 307.1 386.4 311.2 389.8C315.4 393.1 318.6 403.4 322.5 407.2C326.4 411.1 325.4 409.9 330.0 408.5C334.6 407.1 340.4 402.1 345.0 400.5C349.6 398.9 349.9 397.3 352.5 401.0C355.1 404.7 355.4 410.2 357.5 418.5C359.6 426.8 360.7 435.7 362.5 441.0C364.3 446.3 363.9 444.3 366.2 444.0C368.6 443.7 370.4 443.4 373.8 439.8C377.1 436.1 378.9 429.2 382.5 426.5C386.1 423.8 386.9 424.5 391.2 426.5C395.6 428.5 399.4 434.0 403.8 436.0C408.1 438.0 408.1 436.6 412.5 436.0C416.9 435.4 420.9 433.5 425.0 433.0C429.1 432.5 428.4 432.8 432.5 433.5C436.6 434.2 440.9 436.0 445.0 436.5C449.1 437.0 448.4 436.7 452.5 436.0C456.6 435.3 460.9 433.5 465.0 433.0C469.1 432.5 468.4 432.8 472.5 433.5C476.6 434.2 480.6 436.1 485.0 436.5C489.4 436.9 490.1 437.2 493.8 435.5C497.4 433.8 498.9 430.1 502.5 428.5C506.1 426.9 508.4 426.4 511.2 428.0C514.1 429.6 514.2 431.2 516.2 436.0C518.3 440.8 518.4 447.6 521.2 451.0C524.1 454.4 521.2 452.2 530.0 452.5C540.3 452.8 560.9 452.8 571.2 452.5C580.0 450.7 576.1 445.9 580.0 444.0C583.9 442.1 585.1 442.2 590.0 443.5C594.9 444.8 599.1 449.1 603.8 450.5C608.4 451.9 608.1 451.4 612.5 450.5C616.9 449.6 616.7 446.7 625.0 446.0C633.3 445.7 644.2 447.6 652.5 447.2C660.8 446.7 660.6 444.3 665.0 443.5C669.4 442.7 670.1 441.8 673.8 443.5C677.4 445.2 678.6 449.6 682.5 451.5C686.4 453.4 689.7 455.7 692.5 452.5C695.3 449.3 694.7 447.2 696.2 436.0C697.8 424.8 698.2 408.8 700.0 398.5C701.8 388.2 702.4 388.4 705.0 386.0C707.6 383.6 708.6 388.8 712.5 386.8C716.4 384.7 719.6 378.2 723.8 376.0C727.9 373.8 728.4 374.0 732.5 376.0C736.6 378.0 739.6 383.6 743.8 385.5C747.9 387.4 748.4 382.8 752.5 385.0C756.6 387.2 759.6 393.5 763.8 396.0C767.9 398.5 768.4 400.8 772.5 397.2C776.6 393.7 779.6 382.8 783.8 379.0C787.9 375.2 788.4 379.7 792.5 379.0C796.6 378.3 799.6 376.1 803.8 375.5C807.9 374.9 808.1 375.4 812.5 376.0C816.9 376.6 820.4 377.9 825.0 378.5C829.6 379.1 830.9 378.4 835.0 379.0C839.1 379.6 840.9 380.8 845.0 381.5C849.1 382.2 849.3 381.1 855.0 382.2C860.7 383.4 868.1 390.6 872.5 387.2C876.2 383.9 875.0 381.8 876.2 366.0C877.5 350.2 877.7 332.7 878.8 311.0C879.8 289.3 880.2 274.0 881.2 261.0C882.3 248.0 883.0 250.7 883.8 248.0C884.5 245.3 883.8 248.0 885.0 248.0C891.2 248.0 906.8 247.7 913.8 248.0C918.8 250.4 916.7 254.2 918.8 259.8C920.8 265.3 921.4 270.8 923.8 274.8C926.1 278.7 927.4 279.3 930.0 279.0C932.6 278.7 933.7 277.2 936.2 273.5C938.8 269.8 939.9 264.1 942.5 261.0C945.1 257.9 945.4 258.2 948.8 258.5C952.1 258.8 954.9 260.7 958.8 262.2C962.6 263.8 964.4 265.3 967.5 266.0C970.6 266.7 971.2 268.3 973.8 265.5C976.3 262.7 977.7 255.8 980.0 252.2C982.3 248.7 981.6 249.2 985.0 248.5C988.4 247.8 992.4 247.4 996.2 249.0C1000.1 250.6 1000.4 254.4 1003.8 256.0C1007.1 257.6 1008.6 254.2 1012.5 256.5C1016.4 258.8 1018.6 264.7 1022.5 267.2C1026.4 269.8 1027.1 269.9 1031.2 269.0C1035.4 268.1 1038.1 264.4 1042.5 263.0C1046.9 261.6 1048.4 261.7 1052.5 262.2C1056.6 262.8 1058.4 264.7 1062.5 265.5C1066.6 266.3 1068.4 267.7 1072.5 266.0C1076.6 264.3 1078.6 259.6 1082.5 257.2C1086.4 254.9 1088.2 254.0 1091.2 254.8C1094.3 255.5 1094.9 255.6 1097.5 261.0C1100.1 266.4 1101.2 275.3 1103.8 281.0C1106.3 286.7 1107.4 288.5 1110.0 288.5C1112.6 288.5 1113.7 287.7 1116.2 281.0C1118.8 274.3 1120.4 262.3 1122.5 256.0C1124.6 249.7 1122.5 251.6 1126.2 250.5C1130.4 250.2 1136.6 250.7 1142.5 250.5C1148.4 250.3 1151.6 246.5 1155.0 249.8C1158.4 253.0 1157.5 253.3 1158.8 266.0C1160.0 278.7 1160.2 295.0 1161.2 311.0C1162.3 327.0 1162.7 334.7 1163.8 343.5C1164.8 352.3 1164.4 351.7 1166.2 353.5C1168.1 355.3 1168.9 350.8 1172.5 352.2C1176.1 353.7 1179.4 358.6 1183.8 360.5C1188.1 362.4 1189.1 360.6 1193.8 361.5C1198.4 362.4 1201.9 364.1 1206.2 364.8C1210.6 365.4 1210.9 365.5 1215.0 364.8C1219.1 364.0 1222.4 361.8 1226.2 361.0C1230.1 360.2 1229.9 358.7 1233.8 361.0C1237.6 363.3 1241.1 369.7 1245.0 372.2C1248.9 374.8 1249.4 373.5 1252.5 373.5C1255.6 373.5 1256.4 372.9 1260.0 372.2C1263.6 371.6 1264.8 370.1 1270.0 370.5C1275.2 370.9 1280.1 373.4 1285.0 374.0C1289.9 374.6 1289.6 375.1 1293.8 373.5C1297.9 371.9 1300.9 367.9 1305.0 366.5C1309.1 365.1 1309.4 364.9 1313.8 366.5C1318.1 368.1 1322.1 372.6 1326.2 374.0C1330.4 375.4 1329.9 375.4 1333.8 373.5C1337.6 371.6 1340.6 366.6 1345.0 364.8C1349.4 362.9 1350.9 365.5 1355.0 364.8C1359.1 364.0 1360.9 361.9 1365.0 361.0C1369.1 360.1 1370.9 358.0 1375.0 360.5C1379.1 363.0 1381.4 370.1 1385.0 373.0C1388.6 375.9 1388.4 376.1 1392.5 374.8C1396.6 373.4 1400.3 368.3 1405.0 366.5C1409.7 364.7 1410.9 363.5 1415.0 366.0C1419.1 368.5 1421.1 375.4 1425.0 378.5C1428.9 381.6 1429.9 383.6 1433.8 381.0C1437.6 378.4 1439.9 369.6 1443.8 366.0C1447.6 362.4 1448.1 362.1 1452.5 363.5C1456.9 364.9 1460.3 371.0 1465.0 373.0C1469.7 375.0 1470.6 371.2 1475.0 373.0C1479.4 374.8 1482.1 379.8 1486.2 381.5C1490.4 383.2 1491.9 378.0 1495.0 381.0C1498.1 384.0 1498.9 389.0 1501.2 396.0C1503.6 403.0 1503.9 410.2 1506.2 414.8C1508.6 419.3 1509.9 418.3 1512.5 418.0C1515.1 417.7 1516.2 418.3 1518.8 413.5C1521.3 408.7 1522.7 399.1 1525.0 394.8C1527.3 390.4 1525.9 392.0 1530.0 392.2C1534.1 392.5 1539.8 395.3 1545.0 396.0C1550.2 396.7 1550.6 393.2 1555.0 395.5C1559.4 397.8 1562.1 404.8 1566.2 407.2C1570.4 409.7 1571.1 404.4 1575.0 407.2C1578.9 410.1 1581.6 417.5 1585.0 421.0C1588.4 424.5 1588.7 424.3 1591.2 424.0C1593.8 423.7 1594.7 425.3 1597.5 419.8C1600.3 414.2 1602.7 402.4 1605.0 397.2C1607.3 392.1 1606.3 395.0 1608.8 394.8C1611.2 394.5 1615.1 395.7 1616.8 396.0" fill="none" stroke="#1297f4" stroke-width="3.6" stroke-linejoin="round" stroke-linecap="butt"/>
<path class="dash" stroke-opacity=".92" stroke="#1b86dc" d="M1634 248.2H893.3"/>
<path class="dash" style="stroke-width:2.1;stroke-opacity:.66" stroke="#74c27c" d="M1590 374.8H96"/>
<path class="dash" stroke-opacity=".85" stroke="#d2b24a" d="M1634 454.0H531.6"/>
<path transform="translate(1617 374.0)" d="M0 0L-29.5 -10L-21 0L-29.5 10Z" fill="#41b84c"/>
<circle cx="884.3" cy="248.2" r="7.2" fill="#0f99f7"/>
<circle cx="522.6" cy="453.2" r="7.2" fill="#cd9a2d"/>
<circle cx="81.5" cy="373.6" r="7.2" fill="#4cc153"/>
<text class="vl" x="1644" y="253.2" fill="#1a8be2">97</text>
<text class="vl" x="1626.5" y="379.2" fill="#46ad50">53.01</text>
<text class="vl" x="1644" y="457.8" fill="#c9a12f">25</text>
</g>
<g class="chart" id="c2">
<text class="yl" x="69" y="602.2">84</text>
<text class="yl" x="69" y="637.2">81</text>
<text class="yl" x="69" y="672.1">78</text>
<text class="yl" x="69" y="707.0">75</text>
<text class="yl" x="69" y="741.9">72</text>
<text class="yl" x="69" y="776.8">69</text>
<path class="grid" d="M81.25 575.5V784.5M101.33 575.5V784.5M121.41 575.5V784.5M141.50 575.5V784.5M161.58 575.5V784.5M181.66 575.5V784.5M201.74 575.5V784.5M221.82 575.5V784.5M241.91 575.5V784.5M261.99 575.5V784.5M282.07 575.5V784.5M302.15 575.5V784.5M322.23 575.5V784.5M342.32 575.5V784.5M362.40 575.5V784.5M382.48 575.5V784.5M402.56 575.5V784.5M422.64 575.5V784.5M442.73 575.5V784.5M462.81 575.5V784.5M482.89 575.5V784.5M502.97 575.5V784.5M523.05 575.5V784.5M543.14 575.5V784.5M563.22 575.5V784.5M583.30 575.5V784.5M603.38 575.5V784.5M623.46 575.5V784.5M643.55 575.5V784.5M663.63 575.5V784.5M683.71 575.5V784.5M703.79 575.5V784.5M723.87 575.5V784.5M743.96 575.5V784.5M764.04 575.5V784.5M784.12 575.5V784.5M804.20 575.5V784.5M824.28 575.5V784.5M844.37 575.5V784.5M864.45 575.5V784.5M884.53 575.5V784.5M904.61 575.5V784.5M924.69 575.5V784.5M944.78 575.5V784.5M964.86 575.5V784.5M984.94 575.5V784.5M1005.02 575.5V784.5M1025.10 575.5V784.5M1045.19 575.5V784.5M1065.27 575.5V784.5M1085.35 575.5V784.5M1105.43 575.5V784.5M1125.51 575.5V784.5M1145.60 575.5V784.5M1165.68 575.5V784.5M1185.76 575.5V784.5M1205.84 575.5V784.5M1225.92 575.5V784.5M1246.01 575.5V784.5M1266.09 575.5V784.5M1286.17 575.5V784.5M1306.25 575.5V784.5M1326.33 575.5V784.5M1346.42 575.5V784.5M1366.50 575.5V784.5M1386.58 575.5V784.5M1406.66 575.5V784.5M1426.74 575.5V784.5M1446.83 575.5V784.5M1466.91 575.5V784.5M1486.99 575.5V784.5M1507.07 575.5V784.5M1527.15 575.5V784.5M1547.24 575.5V784.5M1567.32 575.5V784.5M1587.40 575.5V784.5M1607.48 575.5V784.5M81.25 575.50H1616.75M81.25 597.70H1616.75M81.25 632.70H1616.75M81.25 667.60H1616.75M81.25 702.50H1616.75M81.25 737.40H1616.75M81.25 772.30H1616.75M81.25 784.50H1616.75"/>
<clipPath id="cpc2"><path d="M81.2 692.0C85.6 691.8 96.6 691.0 102.5 691.2C108.4 691.5 107.4 695.3 110.0 693.0C112.6 690.7 113.2 688.9 115.0 680.0C116.8 671.1 116.9 657.9 118.8 650.0C120.6 642.1 121.2 643.1 123.8 642.0C126.3 640.9 127.4 641.6 131.2 644.5C135.1 647.4 138.1 654.0 142.5 656.2C146.9 658.5 146.8 655.3 152.5 655.5C158.2 655.7 165.1 657.3 170.0 657.0C174.9 654.3 173.7 647.7 176.2 642.5C178.8 637.3 179.7 634.3 182.5 632.0C185.3 629.7 184.6 631.6 190.0 631.5C195.4 631.4 203.6 631.2 208.8 631.5C213.9 632.5 212.2 633.6 215.0 636.2C217.8 638.9 219.4 642.6 222.5 644.5C225.6 646.4 226.1 647.9 230.0 645.5C233.9 643.1 236.9 635.4 241.2 633.0C245.6 630.6 248.2 637.5 251.2 633.8C254.3 630.0 254.4 623.5 256.2 615.0C258.1 606.5 258.4 598.4 260.0 592.5C261.6 586.6 261.2 587.4 263.8 586.2C266.3 585.1 269.4 583.6 272.5 587.0C275.6 590.4 276.2 597.6 278.8 602.5C281.3 607.4 282.4 609.2 285.0 610.5C287.6 611.8 287.9 611.5 291.2 608.8C294.6 606.0 297.4 599.6 301.2 597.0C305.1 594.4 305.6 593.7 310.0 596.2C314.4 598.8 318.1 607.1 322.5 609.5C326.9 611.9 328.4 604.8 331.2 608.0C334.1 611.2 334.2 616.1 336.2 625.0C338.3 633.9 339.4 644.5 341.2 651.2C343.1 658.0 341.6 656.6 345.0 657.5C348.4 658.4 352.1 656.3 357.5 655.5C362.9 654.7 367.4 650.8 371.2 653.8C375.1 656.7 374.4 660.4 376.2 670.0C378.1 679.6 378.4 690.7 380.0 700.0C381.6 709.3 381.4 712.2 383.8 715.0C386.1 717.8 387.4 711.4 391.2 713.8C395.1 716.1 398.1 723.7 402.5 726.2C406.9 728.8 406.8 726.5 412.5 726.2C418.2 726.0 423.8 724.7 430.0 725.0C436.2 727.3 438.4 734.8 442.5 737.5C446.6 740.2 442.5 737.9 450.0 738.0C470.9 738.1 522.8 738.3 543.8 738.0C551.2 737.7 548.4 735.3 551.2 736.5C554.1 737.7 554.9 741.0 557.5 743.8C560.1 746.5 561.2 748.6 563.8 750.0C566.3 751.4 567.4 751.1 570.0 750.5C572.6 749.9 573.7 749.4 576.2 747.0C578.8 744.6 580.2 740.9 582.5 738.8C584.8 736.6 584.9 736.7 587.5 736.5C590.1 736.3 587.5 737.7 595.0 738.0C610.5 738.3 646.7 738.3 662.5 738.0C671.2 737.7 668.1 735.3 671.2 736.5C674.4 737.7 674.7 740.9 677.5 743.8C680.3 746.6 681.9 748.8 685.0 750.5C688.1 752.2 690.2 755.2 692.5 752.0C694.8 748.8 695.0 750.4 696.2 735.0C697.5 719.6 697.7 701.3 698.8 677.5C699.8 653.7 700.2 636.3 701.2 620.0C702.3 603.7 702.2 604.2 703.8 598.8C705.3 593.3 706.4 594.0 708.8 593.8C711.1 593.5 712.9 593.1 715.0 597.5C717.1 601.9 717.5 604.1 718.8 615.0C720.0 625.9 720.0 638.9 721.2 650.0C722.5 661.1 722.9 665.1 725.0 668.8C727.1 672.4 727.6 670.1 731.2 667.5C734.9 664.9 739.4 658.9 742.5 656.2C745.6 653.6 744.2 654.7 746.2 654.5C748.3 654.3 749.1 657.4 752.5 655.5C755.9 653.6 759.7 647.9 762.5 645.5C765.3 643.1 763.9 643.9 766.2 643.8C768.6 643.6 770.6 648.4 773.8 645.0C776.9 641.6 778.7 632.9 781.2 627.5C783.8 622.1 783.9 620.7 786.2 618.8C788.6 616.8 790.2 616.2 792.5 618.0C794.8 619.8 795.7 620.9 797.5 627.5C799.3 634.1 799.7 641.7 801.2 650.0C802.8 658.3 803.2 663.8 805.0 667.5C806.8 671.2 806.9 668.1 810.0 668.0C813.1 667.9 815.4 667.1 820.0 667.0C824.6 666.9 827.9 669.7 832.5 667.5C837.1 665.3 839.7 658.9 842.5 656.2C845.3 653.6 843.9 654.5 846.2 654.5C848.6 654.5 850.9 659.8 853.8 656.2C856.6 652.7 857.7 645.2 860.0 637.5C862.3 629.8 862.8 623.3 865.0 619.0C867.2 614.7 868.2 615.6 870.5 616.5C872.8 617.4 874.0 614.5 876.0 623.5C878.0 632.5 878.6 646.3 880.0 660.0C881.4 673.7 881.7 683.2 883.0 690.0C884.3 696.8 884.0 692.7 886.2 693.0C888.5 693.3 889.9 689.4 893.8 691.2C897.6 693.1 901.1 699.9 905.0 702.0C908.9 704.1 909.9 699.1 912.5 701.2C915.1 703.4 915.4 706.0 917.5 712.5C919.6 719.0 920.4 726.9 922.5 732.5C924.6 738.1 925.2 738.5 927.5 739.5C929.8 740.5 930.4 740.2 933.8 737.5C937.1 734.8 940.4 728.8 943.8 726.2C947.1 723.7 945.6 725.2 950.0 725.0C954.4 724.8 960.1 725.8 965.0 725.5C969.9 725.2 970.9 721.3 973.8 723.8C976.6 726.2 976.4 729.8 978.8 737.5C981.1 745.2 982.9 756.0 985.0 761.2C987.1 766.5 986.7 763.2 988.8 763.0C990.8 762.8 991.9 758.8 995.0 760.5C998.1 762.2 1000.6 768.7 1003.8 771.2C1006.9 773.8 1007.4 773.0 1010.0 773.0C1012.6 773.0 1013.1 773.9 1016.2 771.2C1019.4 768.6 1021.1 762.2 1025.0 760.0C1028.9 757.8 1025.0 760.4 1035.0 760.5C1047.4 760.6 1073.1 760.7 1085.0 760.5C1092.5 760.3 1089.9 758.8 1092.5 759.5C1095.1 760.2 1094.9 761.1 1097.5 763.8C1100.1 766.4 1097.5 770.7 1105.0 772.5C1112.8 772.8 1127.2 772.8 1135.0 772.5C1142.5 770.2 1139.9 763.9 1142.5 761.2C1145.1 758.6 1143.9 759.7 1147.5 759.5C1151.1 759.3 1155.6 759.9 1160.0 760.5C1164.4 761.1 1165.9 761.8 1168.8 762.5C1171.6 763.2 1171.9 767.4 1173.8 763.8C1175.6 760.1 1176.2 755.1 1177.5 745.0C1178.8 734.9 1178.9 725.3 1180.0 715.0C1181.1 704.7 1181.5 700.6 1183.0 695.0C1184.5 689.4 1185.3 689.0 1187.5 688.0C1189.7 687.0 1190.4 687.3 1193.8 690.0C1197.1 692.7 1200.1 698.4 1203.8 701.2C1207.4 704.1 1208.4 703.8 1211.2 703.8C1214.1 703.8 1214.4 703.8 1217.5 701.2C1220.6 698.7 1222.9 693.3 1226.2 691.2C1229.6 689.2 1231.2 693.1 1233.8 691.2C1236.3 689.4 1236.9 690.0 1238.8 682.5C1240.6 675.0 1241.0 663.0 1242.5 655.0C1244.0 647.0 1244.4 646.6 1246.2 643.8C1248.1 640.9 1248.9 640.7 1251.2 641.2C1253.6 641.8 1255.7 643.4 1257.5 646.2C1259.3 649.1 1258.5 649.1 1260.0 655.0C1261.5 660.9 1262.9 669.3 1265.0 675.0C1267.1 680.7 1267.9 682.0 1270.0 682.5C1272.1 683.0 1272.7 683.2 1275.0 677.5C1277.3 671.8 1278.9 662.1 1281.2 655.0C1283.6 647.9 1283.7 645.2 1286.2 643.0C1288.8 640.8 1290.7 647.7 1293.8 644.5C1296.8 641.3 1298.7 632.7 1301.2 627.5C1303.8 622.3 1303.9 621.6 1306.2 619.5C1308.6 617.4 1309.9 616.4 1312.5 617.5C1315.1 618.6 1316.1 619.6 1318.8 625.0C1321.4 630.4 1322.4 639.9 1325.5 643.8C1328.6 647.6 1330.2 641.8 1333.8 643.8C1337.3 645.7 1339.4 650.4 1342.5 653.0C1345.6 655.6 1345.1 655.7 1348.8 656.2C1352.4 656.8 1354.8 655.5 1360.0 655.5C1365.2 655.5 1369.1 658.2 1373.8 656.2C1378.4 654.3 1379.4 649.0 1382.5 646.2C1385.6 643.5 1385.1 643.5 1388.8 643.0C1392.4 642.5 1394.8 643.3 1400.0 643.8C1405.2 644.2 1408.8 647.2 1413.8 645.0C1418.7 642.8 1420.7 635.8 1423.8 633.0C1426.8 630.2 1426.2 631.5 1428.8 631.2C1431.3 631.0 1432.9 634.1 1436.2 632.0C1439.6 629.9 1441.9 624.1 1445.0 621.2C1448.1 618.4 1448.7 617.7 1451.2 618.0C1453.8 618.3 1455.2 617.4 1457.5 622.5C1459.8 627.6 1460.4 635.4 1462.5 642.5C1464.6 649.6 1465.2 653.6 1467.5 657.0C1469.8 660.4 1471.4 659.7 1473.8 658.8C1476.1 657.8 1476.7 657.1 1478.8 652.5C1480.8 647.9 1481.7 640.6 1483.8 636.2C1485.8 631.9 1485.4 632.1 1488.8 631.2C1492.1 630.4 1491.5 631.8 1500.0 632.0C1508.5 632.2 1522.5 632.2 1530.0 632.0C1536.2 631.8 1533.2 629.1 1536.2 631.2C1539.3 633.4 1542.2 639.6 1545.0 642.5C1547.8 645.4 1547.7 645.2 1550.0 645.5C1552.3 645.8 1553.4 642.0 1556.2 643.8C1559.1 645.5 1560.7 650.6 1563.8 653.8C1566.8 656.9 1568.7 658.1 1571.2 658.8C1573.8 659.4 1574.4 661.9 1576.2 657.0C1578.1 652.1 1578.5 647.3 1580.0 635.0C1581.5 622.7 1582.2 607.4 1583.8 597.5C1585.3 587.6 1584.9 589.3 1587.5 587.0C1590.1 584.7 1593.4 584.1 1596.2 586.2C1599.1 588.4 1599.4 590.0 1601.2 597.5C1603.1 605.0 1603.5 615.0 1605.0 622.5C1606.5 630.0 1606.3 631.7 1608.8 633.8C1611.2 635.8 1615.1 632.8 1616.8 632.5L1616.75 784.5L81.25 784.5Z"/></clipPath>
<path d="M81.2 692.0C85.6 691.8 96.6 691.0 102.5 691.2C108.4 691.5 107.4 695.3 110.0 693.0C112.6 690.7 113.2 688.9 115.0 680.0C116.8 671.1 116.9 657.9 118.8 650.0C120.6 642.1 121.2 643.1 123.8 642.0C126.3 640.9 127.4 641.6 131.2 644.5C135.1 647.4 138.1 654.0 142.5 656.2C146.9 658.5 146.8 655.3 152.5 655.5C158.2 655.7 165.1 657.3 170.0 657.0C174.9 654.3 173.7 647.7 176.2 642.5C178.8 637.3 179.7 634.3 182.5 632.0C185.3 629.7 184.6 631.6 190.0 631.5C195.4 631.4 203.6 631.2 208.8 631.5C213.9 632.5 212.2 633.6 215.0 636.2C217.8 638.9 219.4 642.6 222.5 644.5C225.6 646.4 226.1 647.9 230.0 645.5C233.9 643.1 236.9 635.4 241.2 633.0C245.6 630.6 248.2 637.5 251.2 633.8C254.3 630.0 254.4 623.5 256.2 615.0C258.1 606.5 258.4 598.4 260.0 592.5C261.6 586.6 261.2 587.4 263.8 586.2C266.3 585.1 269.4 583.6 272.5 587.0C275.6 590.4 276.2 597.6 278.8 602.5C281.3 607.4 282.4 609.2 285.0 610.5C287.6 611.8 287.9 611.5 291.2 608.8C294.6 606.0 297.4 599.6 301.2 597.0C305.1 594.4 305.6 593.7 310.0 596.2C314.4 598.8 318.1 607.1 322.5 609.5C326.9 611.9 328.4 604.8 331.2 608.0C334.1 611.2 334.2 616.1 336.2 625.0C338.3 633.9 339.4 644.5 341.2 651.2C343.1 658.0 341.6 656.6 345.0 657.5C348.4 658.4 352.1 656.3 357.5 655.5C362.9 654.7 367.4 650.8 371.2 653.8C375.1 656.7 374.4 660.4 376.2 670.0C378.1 679.6 378.4 690.7 380.0 700.0C381.6 709.3 381.4 712.2 383.8 715.0C386.1 717.8 387.4 711.4 391.2 713.8C395.1 716.1 398.1 723.7 402.5 726.2C406.9 728.8 406.8 726.5 412.5 726.2C418.2 726.0 423.8 724.7 430.0 725.0C436.2 727.3 438.4 734.8 442.5 737.5C446.6 740.2 442.5 737.9 450.0 738.0C470.9 738.1 522.8 738.3 543.8 738.0C551.2 737.7 548.4 735.3 551.2 736.5C554.1 737.7 554.9 741.0 557.5 743.8C560.1 746.5 561.2 748.6 563.8 750.0C566.3 751.4 567.4 751.1 570.0 750.5C572.6 749.9 573.7 749.4 576.2 747.0C578.8 744.6 580.2 740.9 582.5 738.8C584.8 736.6 584.9 736.7 587.5 736.5C590.1 736.3 587.5 737.7 595.0 738.0C610.5 738.3 646.7 738.3 662.5 738.0C671.2 737.7 668.1 735.3 671.2 736.5C674.4 737.7 674.7 740.9 677.5 743.8C680.3 746.6 681.9 748.8 685.0 750.5C688.1 752.2 690.2 755.2 692.5 752.0C694.8 748.8 695.0 750.4 696.2 735.0C697.5 719.6 697.7 701.3 698.8 677.5C699.8 653.7 700.2 636.3 701.2 620.0C702.3 603.7 702.2 604.2 703.8 598.8C705.3 593.3 706.4 594.0 708.8 593.8C711.1 593.5 712.9 593.1 715.0 597.5C717.1 601.9 717.5 604.1 718.8 615.0C720.0 625.9 720.0 638.9 721.2 650.0C722.5 661.1 722.9 665.1 725.0 668.8C727.1 672.4 727.6 670.1 731.2 667.5C734.9 664.9 739.4 658.9 742.5 656.2C745.6 653.6 744.2 654.7 746.2 654.5C748.3 654.3 749.1 657.4 752.5 655.5C755.9 653.6 759.7 647.9 762.5 645.5C765.3 643.1 763.9 643.9 766.2 643.8C768.6 643.6 770.6 648.4 773.8 645.0C776.9 641.6 778.7 632.9 781.2 627.5C783.8 622.1 783.9 620.7 786.2 618.8C788.6 616.8 790.2 616.2 792.5 618.0C794.8 619.8 795.7 620.9 797.5 627.5C799.3 634.1 799.7 641.7 801.2 650.0C802.8 658.3 803.2 663.8 805.0 667.5C806.8 671.2 806.9 668.1 810.0 668.0C813.1 667.9 815.4 667.1 820.0 667.0C824.6 666.9 827.9 669.7 832.5 667.5C837.1 665.3 839.7 658.9 842.5 656.2C845.3 653.6 843.9 654.5 846.2 654.5C848.6 654.5 850.9 659.8 853.8 656.2C856.6 652.7 857.7 645.2 860.0 637.5C862.3 629.8 862.8 623.3 865.0 619.0C867.2 614.7 868.2 615.6 870.5 616.5C872.8 617.4 874.0 614.5 876.0 623.5C878.0 632.5 878.6 646.3 880.0 660.0C881.4 673.7 881.7 683.2 883.0 690.0C884.3 696.8 884.0 692.7 886.2 693.0C888.5 693.3 889.9 689.4 893.8 691.2C897.6 693.1 901.1 699.9 905.0 702.0C908.9 704.1 909.9 699.1 912.5 701.2C915.1 703.4 915.4 706.0 917.5 712.5C919.6 719.0 920.4 726.9 922.5 732.5C924.6 738.1 925.2 738.5 927.5 739.5C929.8 740.5 930.4 740.2 933.8 737.5C937.1 734.8 940.4 728.8 943.8 726.2C947.1 723.7 945.6 725.2 950.0 725.0C954.4 724.8 960.1 725.8 965.0 725.5C969.9 725.2 970.9 721.3 973.8 723.8C976.6 726.2 976.4 729.8 978.8 737.5C981.1 745.2 982.9 756.0 985.0 761.2C987.1 766.5 986.7 763.2 988.8 763.0C990.8 762.8 991.9 758.8 995.0 760.5C998.1 762.2 1000.6 768.7 1003.8 771.2C1006.9 773.8 1007.4 773.0 1010.0 773.0C1012.6 773.0 1013.1 773.9 1016.2 771.2C1019.4 768.6 1021.1 762.2 1025.0 760.0C1028.9 757.8 1025.0 760.4 1035.0 760.5C1047.4 760.6 1073.1 760.7 1085.0 760.5C1092.5 760.3 1089.9 758.8 1092.5 759.5C1095.1 760.2 1094.9 761.1 1097.5 763.8C1100.1 766.4 1097.5 770.7 1105.0 772.5C1112.8 772.8 1127.2 772.8 1135.0 772.5C1142.5 770.2 1139.9 763.9 1142.5 761.2C1145.1 758.6 1143.9 759.7 1147.5 759.5C1151.1 759.3 1155.6 759.9 1160.0 760.5C1164.4 761.1 1165.9 761.8 1168.8 762.5C1171.6 763.2 1171.9 767.4 1173.8 763.8C1175.6 760.1 1176.2 755.1 1177.5 745.0C1178.8 734.9 1178.9 725.3 1180.0 715.0C1181.1 704.7 1181.5 700.6 1183.0 695.0C1184.5 689.4 1185.3 689.0 1187.5 688.0C1189.7 687.0 1190.4 687.3 1193.8 690.0C1197.1 692.7 1200.1 698.4 1203.8 701.2C1207.4 704.1 1208.4 703.8 1211.2 703.8C1214.1 703.8 1214.4 703.8 1217.5 701.2C1220.6 698.7 1222.9 693.3 1226.2 691.2C1229.6 689.2 1231.2 693.1 1233.8 691.2C1236.3 689.4 1236.9 690.0 1238.8 682.5C1240.6 675.0 1241.0 663.0 1242.5 655.0C1244.0 647.0 1244.4 646.6 1246.2 643.8C1248.1 640.9 1248.9 640.7 1251.2 641.2C1253.6 641.8 1255.7 643.4 1257.5 646.2C1259.3 649.1 1258.5 649.1 1260.0 655.0C1261.5 660.9 1262.9 669.3 1265.0 675.0C1267.1 680.7 1267.9 682.0 1270.0 682.5C1272.1 683.0 1272.7 683.2 1275.0 677.5C1277.3 671.8 1278.9 662.1 1281.2 655.0C1283.6 647.9 1283.7 645.2 1286.2 643.0C1288.8 640.8 1290.7 647.7 1293.8 644.5C1296.8 641.3 1298.7 632.7 1301.2 627.5C1303.8 622.3 1303.9 621.6 1306.2 619.5C1308.6 617.4 1309.9 616.4 1312.5 617.5C1315.1 618.6 1316.1 619.6 1318.8 625.0C1321.4 630.4 1322.4 639.9 1325.5 643.8C1328.6 647.6 1330.2 641.8 1333.8 643.8C1337.3 645.7 1339.4 650.4 1342.5 653.0C1345.6 655.6 1345.1 655.7 1348.8 656.2C1352.4 656.8 1354.8 655.5 1360.0 655.5C1365.2 655.5 1369.1 658.2 1373.8 656.2C1378.4 654.3 1379.4 649.0 1382.5 646.2C1385.6 643.5 1385.1 643.5 1388.8 643.0C1392.4 642.5 1394.8 643.3 1400.0 643.8C1405.2 644.2 1408.8 647.2 1413.8 645.0C1418.7 642.8 1420.7 635.8 1423.8 633.0C1426.8 630.2 1426.2 631.5 1428.8 631.2C1431.3 631.0 1432.9 634.1 1436.2 632.0C1439.6 629.9 1441.9 624.1 1445.0 621.2C1448.1 618.4 1448.7 617.7 1451.2 618.0C1453.8 618.3 1455.2 617.4 1457.5 622.5C1459.8 627.6 1460.4 635.4 1462.5 642.5C1464.6 649.6 1465.2 653.6 1467.5 657.0C1469.8 660.4 1471.4 659.7 1473.8 658.8C1476.1 657.8 1476.7 657.1 1478.8 652.5C1480.8 647.9 1481.7 640.6 1483.8 636.2C1485.8 631.9 1485.4 632.1 1488.8 631.2C1492.1 630.4 1491.5 631.8 1500.0 632.0C1508.5 632.2 1522.5 632.2 1530.0 632.0C1536.2 631.8 1533.2 629.1 1536.2 631.2C1539.3 633.4 1542.2 639.6 1545.0 642.5C1547.8 645.4 1547.7 645.2 1550.0 645.5C1552.3 645.8 1553.4 642.0 1556.2 643.8C1559.1 645.5 1560.7 650.6 1563.8 653.8C1566.8 656.9 1568.7 658.1 1571.2 658.8C1573.8 659.4 1574.4 661.9 1576.2 657.0C1578.1 652.1 1578.5 647.3 1580.0 635.0C1581.5 622.7 1582.2 607.4 1583.8 597.5C1585.3 587.6 1584.9 589.3 1587.5 587.0C1590.1 584.7 1593.4 584.1 1596.2 586.2C1599.1 588.4 1599.4 590.0 1601.2 597.5C1603.1 605.0 1603.5 615.0 1605.0 622.5C1606.5 630.0 1606.3 631.7 1608.8 633.8C1611.2 635.8 1615.1 632.8 1616.8 632.5L1616.75 784.5L81.25 784.5Z" fill="url(#gc2)"/>
<path class="grid2" clip-path="url(#cpc2)" d="M81.25 575.5V784.5M101.33 575.5V784.5M121.41 575.5V784.5M141.50 575.5V784.5M161.58 575.5V784.5M181.66 575.5V784.5M201.74 575.5V784.5M221.82 575.5V784.5M241.91 575.5V784.5M261.99 575.5V784.5M282.07 575.5V784.5M302.15 575.5V784.5M322.23 575.5V784.5M342.32 575.5V784.5M362.40 575.5V784.5M382.48 575.5V784.5M402.56 575.5V784.5M422.64 575.5V784.5M442.73 575.5V784.5M462.81 575.5V784.5M482.89 575.5V784.5M502.97 575.5V784.5M523.05 575.5V784.5M543.14 575.5V784.5M563.22 575.5V784.5M583.30 575.5V784.5M603.38 575.5V784.5M623.46 575.5V784.5M643.55 575.5V784.5M663.63 575.5V784.5M683.71 575.5V784.5M703.79 575.5V784.5M723.87 575.5V784.5M743.96 575.5V784.5M764.04 575.5V784.5M784.12 575.5V784.5M804.20 575.5V784.5M824.28 575.5V784.5M844.37 575.5V784.5M864.45 575.5V784.5M884.53 575.5V784.5M904.61 575.5V784.5M924.69 575.5V784.5M944.78 575.5V784.5M964.86 575.5V784.5M984.94 575.5V784.5M1005.02 575.5V784.5M1025.10 575.5V784.5M1045.19 575.5V784.5M1065.27 575.5V784.5M1085.35 575.5V784.5M1105.43 575.5V784.5M1125.51 575.5V784.5M1145.60 575.5V784.5M1165.68 575.5V784.5M1185.76 575.5V784.5M1205.84 575.5V784.5M1225.92 575.5V784.5M1246.01 575.5V784.5M1266.09 575.5V784.5M1286.17 575.5V784.5M1306.25 575.5V784.5M1326.33 575.5V784.5M1346.42 575.5V784.5M1366.50 575.5V784.5M1386.58 575.5V784.5M1406.66 575.5V784.5M1426.74 575.5V784.5M1446.83 575.5V784.5M1466.91 575.5V784.5M1486.99 575.5V784.5M1507.07 575.5V784.5M1527.15 575.5V784.5M1547.24 575.5V784.5M1567.32 575.5V784.5M1587.40 575.5V784.5M1607.48 575.5V784.5M81.25 575.50H1616.75M81.25 597.70H1616.75M81.25 632.70H1616.75M81.25 667.60H1616.75M81.25 702.50H1616.75M81.25 737.40H1616.75M81.25 772.30H1616.75M81.25 784.50H1616.75"/>
<path d="M81.2 692.0C85.6 691.8 96.6 691.0 102.5 691.2C108.4 691.5 107.4 695.3 110.0 693.0C112.6 690.7 113.2 688.9 115.0 680.0C116.8 671.1 116.9 657.9 118.8 650.0C120.6 642.1 121.2 643.1 123.8 642.0C126.3 640.9 127.4 641.6 131.2 644.5C135.1 647.4 138.1 654.0 142.5 656.2C146.9 658.5 146.8 655.3 152.5 655.5C158.2 655.7 165.1 657.3 170.0 657.0C174.9 654.3 173.7 647.7 176.2 642.5C178.8 637.3 179.7 634.3 182.5 632.0C185.3 629.7 184.6 631.6 190.0 631.5C195.4 631.4 203.6 631.2 208.8 631.5C213.9 632.5 212.2 633.6 215.0 636.2C217.8 638.9 219.4 642.6 222.5 644.5C225.6 646.4 226.1 647.9 230.0 645.5C233.9 643.1 236.9 635.4 241.2 633.0C245.6 630.6 248.2 637.5 251.2 633.8C254.3 630.0 254.4 623.5 256.2 615.0C258.1 606.5 258.4 598.4 260.0 592.5C261.6 586.6 261.2 587.4 263.8 586.2C266.3 585.1 269.4 583.6 272.5 587.0C275.6 590.4 276.2 597.6 278.8 602.5C281.3 607.4 282.4 609.2 285.0 610.5C287.6 611.8 287.9 611.5 291.2 608.8C294.6 606.0 297.4 599.6 301.2 597.0C305.1 594.4 305.6 593.7 310.0 596.2C314.4 598.8 318.1 607.1 322.5 609.5C326.9 611.9 328.4 604.8 331.2 608.0C334.1 611.2 334.2 616.1 336.2 625.0C338.3 633.9 339.4 644.5 341.2 651.2C343.1 658.0 341.6 656.6 345.0 657.5C348.4 658.4 352.1 656.3 357.5 655.5C362.9 654.7 367.4 650.8 371.2 653.8C375.1 656.7 374.4 660.4 376.2 670.0C378.1 679.6 378.4 690.7 380.0 700.0C381.6 709.3 381.4 712.2 383.8 715.0C386.1 717.8 387.4 711.4 391.2 713.8C395.1 716.1 398.1 723.7 402.5 726.2C406.9 728.8 406.8 726.5 412.5 726.2C418.2 726.0 423.8 724.7 430.0 725.0C436.2 727.3 438.4 734.8 442.5 737.5C446.6 740.2 442.5 737.9 450.0 738.0C470.9 738.1 522.8 738.3 543.8 738.0C551.2 737.7 548.4 735.3 551.2 736.5C554.1 737.7 554.9 741.0 557.5 743.8C560.1 746.5 561.2 748.6 563.8 750.0C566.3 751.4 567.4 751.1 570.0 750.5C572.6 749.9 573.7 749.4 576.2 747.0C578.8 744.6 580.2 740.9 582.5 738.8C584.8 736.6 584.9 736.7 587.5 736.5C590.1 736.3 587.5 737.7 595.0 738.0C610.5 738.3 646.7 738.3 662.5 738.0C671.2 737.7 668.1 735.3 671.2 736.5C674.4 737.7 674.7 740.9 677.5 743.8C680.3 746.6 681.9 748.8 685.0 750.5C688.1 752.2 690.2 755.2 692.5 752.0C694.8 748.8 695.0 750.4 696.2 735.0C697.5 719.6 697.7 701.3 698.8 677.5C699.8 653.7 700.2 636.3 701.2 620.0C702.3 603.7 702.2 604.2 703.8 598.8C705.3 593.3 706.4 594.0 708.8 593.8C711.1 593.5 712.9 593.1 715.0 597.5C717.1 601.9 717.5 604.1 718.8 615.0C720.0 625.9 720.0 638.9 721.2 650.0C722.5 661.1 722.9 665.1 725.0 668.8C727.1 672.4 727.6 670.1 731.2 667.5C734.9 664.9 739.4 658.9 742.5 656.2C745.6 653.6 744.2 654.7 746.2 654.5C748.3 654.3 749.1 657.4 752.5 655.5C755.9 653.6 759.7 647.9 762.5 645.5C765.3 643.1 763.9 643.9 766.2 643.8C768.6 643.6 770.6 648.4 773.8 645.0C776.9 641.6 778.7 632.9 781.2 627.5C783.8 622.1 783.9 620.7 786.2 618.8C788.6 616.8 790.2 616.2 792.5 618.0C794.8 619.8 795.7 620.9 797.5 627.5C799.3 634.1 799.7 641.7 801.2 650.0C802.8 658.3 803.2 663.8 805.0 667.5C806.8 671.2 806.9 668.1 810.0 668.0C813.1 667.9 815.4 667.1 820.0 667.0C824.6 666.9 827.9 669.7 832.5 667.5C837.1 665.3 839.7 658.9 842.5 656.2C845.3 653.6 843.9 654.5 846.2 654.5C848.6 654.5 850.9 659.8 853.8 656.2C856.6 652.7 857.7 645.2 860.0 637.5C862.3 629.8 862.8 623.3 865.0 619.0C867.2 614.7 868.2 615.6 870.5 616.5C872.8 617.4 874.0 614.5 876.0 623.5C878.0 632.5 878.6 646.3 880.0 660.0C881.4 673.7 881.7 683.2 883.0 690.0C884.3 696.8 884.0 692.7 886.2 693.0C888.5 693.3 889.9 689.4 893.8 691.2C897.6 693.1 901.1 699.9 905.0 702.0C908.9 704.1 909.9 699.1 912.5 701.2C915.1 703.4 915.4 706.0 917.5 712.5C919.6 719.0 920.4 726.9 922.5 732.5C924.6 738.1 925.2 738.5 927.5 739.5C929.8 740.5 930.4 740.2 933.8 737.5C937.1 734.8 940.4 728.8 943.8 726.2C947.1 723.7 945.6 725.2 950.0 725.0C954.4 724.8 960.1 725.8 965.0 725.5C969.9 725.2 970.9 721.3 973.8 723.8C976.6 726.2 976.4 729.8 978.8 737.5C981.1 745.2 982.9 756.0 985.0 761.2C987.1 766.5 986.7 763.2 988.8 763.0C990.8 762.8 991.9 758.8 995.0 760.5C998.1 762.2 1000.6 768.7 1003.8 771.2C1006.9 773.8 1007.4 773.0 1010.0 773.0C1012.6 773.0 1013.1 773.9 1016.2 771.2C1019.4 768.6 1021.1 762.2 1025.0 760.0C1028.9 757.8 1025.0 760.4 1035.0 760.5C1047.4 760.6 1073.1 760.7 1085.0 760.5C1092.5 760.3 1089.9 758.8 1092.5 759.5C1095.1 760.2 1094.9 761.1 1097.5 763.8C1100.1 766.4 1097.5 770.7 1105.0 772.5C1112.8 772.8 1127.2 772.8 1135.0 772.5C1142.5 770.2 1139.9 763.9 1142.5 761.2C1145.1 758.6 1143.9 759.7 1147.5 759.5C1151.1 759.3 1155.6 759.9 1160.0 760.5C1164.4 761.1 1165.9 761.8 1168.8 762.5C1171.6 763.2 1171.9 767.4 1173.8 763.8C1175.6 760.1 1176.2 755.1 1177.5 745.0C1178.8 734.9 1178.9 725.3 1180.0 715.0C1181.1 704.7 1181.5 700.6 1183.0 695.0C1184.5 689.4 1185.3 689.0 1187.5 688.0C1189.7 687.0 1190.4 687.3 1193.8 690.0C1197.1 692.7 1200.1 698.4 1203.8 701.2C1207.4 704.1 1208.4 703.8 1211.2 703.8C1214.1 703.8 1214.4 703.8 1217.5 701.2C1220.6 698.7 1222.9 693.3 1226.2 691.2C1229.6 689.2 1231.2 693.1 1233.8 691.2C1236.3 689.4 1236.9 690.0 1238.8 682.5C1240.6 675.0 1241.0 663.0 1242.5 655.0C1244.0 647.0 1244.4 646.6 1246.2 643.8C1248.1 640.9 1248.9 640.7 1251.2 641.2C1253.6 641.8 1255.7 643.4 1257.5 646.2C1259.3 649.1 1258.5 649.1 1260.0 655.0C1261.5 660.9 1262.9 669.3 1265.0 675.0C1267.1 680.7 1267.9 682.0 1270.0 682.5C1272.1 683.0 1272.7 683.2 1275.0 677.5C1277.3 671.8 1278.9 662.1 1281.2 655.0C1283.6 647.9 1283.7 645.2 1286.2 643.0C1288.8 640.8 1290.7 647.7 1293.8 644.5C1296.8 641.3 1298.7 632.7 1301.2 627.5C1303.8 622.3 1303.9 621.6 1306.2 619.5C1308.6 617.4 1309.9 616.4 1312.5 617.5C1315.1 618.6 1316.1 619.6 1318.8 625.0C1321.4 630.4 1322.4 639.9 1325.5 643.8C1328.6 647.6 1330.2 641.8 1333.8 643.8C1337.3 645.7 1339.4 650.4 1342.5 653.0C1345.6 655.6 1345.1 655.7 1348.8 656.2C1352.4 656.8 1354.8 655.5 1360.0 655.5C1365.2 655.5 1369.1 658.2 1373.8 656.2C1378.4 654.3 1379.4 649.0 1382.5 646.2C1385.6 643.5 1385.1 643.5 1388.8 643.0C1392.4 642.5 1394.8 643.3 1400.0 643.8C1405.2 644.2 1408.8 647.2 1413.8 645.0C1418.7 642.8 1420.7 635.8 1423.8 633.0C1426.8 630.2 1426.2 631.5 1428.8 631.2C1431.3 631.0 1432.9 634.1 1436.2 632.0C1439.6 629.9 1441.9 624.1 1445.0 621.2C1448.1 618.4 1448.7 617.7 1451.2 618.0C1453.8 618.3 1455.2 617.4 1457.5 622.5C1459.8 627.6 1460.4 635.4 1462.5 642.5C1464.6 649.6 1465.2 653.6 1467.5 657.0C1469.8 660.4 1471.4 659.7 1473.8 658.8C1476.1 657.8 1476.7 657.1 1478.8 652.5C1480.8 647.9 1481.7 640.6 1483.8 636.2C1485.8 631.9 1485.4 632.1 1488.8 631.2C1492.1 630.4 1491.5 631.8 1500.0 632.0C1508.5 632.2 1522.5 632.2 1530.0 632.0C1536.2 631.8 1533.2 629.1 1536.2 631.2C1539.3 633.4 1542.2 639.6 1545.0 642.5C1547.8 645.4 1547.7 645.2 1550.0 645.5C1552.3 645.8 1553.4 642.0 1556.2 643.8C1559.1 645.5 1560.7 650.6 1563.8 653.8C1566.8 656.9 1568.7 658.1 1571.2 658.8C1573.8 659.4 1574.4 661.9 1576.2 657.0C1578.1 652.1 1578.5 647.3 1580.0 635.0C1581.5 622.7 1582.2 607.4 1583.8 597.5C1585.3 587.6 1584.9 589.3 1587.5 587.0C1590.1 584.7 1593.4 584.1 1596.2 586.2C1599.1 588.4 1599.4 590.0 1601.2 597.5C1603.1 605.0 1603.5 615.0 1605.0 622.5C1606.5 630.0 1606.3 631.7 1608.8 633.8C1611.2 635.8 1615.1 632.8 1616.8 632.5" fill="none" stroke="#d6a02d" stroke-width="3.6" stroke-linejoin="round" stroke-linecap="butt"/>
<path class="dash" stroke-opacity=".92" stroke="#1b86dc" d="M1634 586.3H271.0"/>
<path class="dash" style="stroke-width:2.1;stroke-opacity:.66" stroke="#74c27c" d="M1590 684.6H96"/>
<path class="dash" stroke-opacity=".85" stroke="#d2b24a" d="M1634 773.0H1013.5"/>
<path transform="translate(1617 683.8)" d="M0 0L-29.5 -10L-21 0L-29.5 10Z" fill="#41b84c"/>
<circle cx="262.0" cy="586.3" r="7.2" fill="#0f99f7"/>
<circle cx="1004.5" cy="772.6" r="7.2" fill="#cd9a2d"/>
<circle cx="81.5" cy="683.8" r="7.2" fill="#4cc153"/>
<text class="vl" x="1644" y="591.3" fill="#1a8be2">85</text>
<text class="vl" x="1626.5" y="689.0" fill="#46ad50">76.62</text>
<text class="vl" x="1644" y="776.8" fill="#c9a12f">69</text>
</g>
<g class="chart" id="c3">
<text class="yl" x="69" y="935.3">72</text>
<text class="yl" x="69" y="977.1">69</text>
<text class="yl" x="69" y="1019.1">66</text>
<text class="yl" x="69" y="1061.3">63</text>
<text class="yl" x="69" y="1103.5">60</text>
<path class="grid" d="M81.25 902.8V1112.0M101.33 902.8V1112.0M121.41 902.8V1112.0M141.50 902.8V1112.0M161.58 902.8V1112.0M181.66 902.8V1112.0M201.74 902.8V1112.0M221.82 902.8V1112.0M241.91 902.8V1112.0M261.99 902.8V1112.0M282.07 902.8V1112.0M302.15 902.8V1112.0M322.23 902.8V1112.0M342.32 902.8V1112.0M362.40 902.8V1112.0M382.48 902.8V1112.0M402.56 902.8V1112.0M422.64 902.8V1112.0M442.73 902.8V1112.0M462.81 902.8V1112.0M482.89 902.8V1112.0M502.97 902.8V1112.0M523.05 902.8V1112.0M543.14 902.8V1112.0M563.22 902.8V1112.0M583.30 902.8V1112.0M603.38 902.8V1112.0M623.46 902.8V1112.0M643.55 902.8V1112.0M663.63 902.8V1112.0M683.71 902.8V1112.0M703.79 902.8V1112.0M723.87 902.8V1112.0M743.96 902.8V1112.0M764.04 902.8V1112.0M784.12 902.8V1112.0M804.20 902.8V1112.0M824.28 902.8V1112.0M844.37 902.8V1112.0M864.45 902.8V1112.0M884.53 902.8V1112.0M904.61 902.8V1112.0M924.69 902.8V1112.0M944.78 902.8V1112.0M964.86 902.8V1112.0M984.94 902.8V1112.0M1005.02 902.8V1112.0M1025.10 902.8V1112.0M1045.19 902.8V1112.0M1065.27 902.8V1112.0M1085.35 902.8V1112.0M1105.43 902.8V1112.0M1125.51 902.8V1112.0M1145.60 902.8V1112.0M1165.68 902.8V1112.0M1185.76 902.8V1112.0M1205.84 902.8V1112.0M1225.92 902.8V1112.0M1246.01 902.8V1112.0M1266.09 902.8V1112.0M1286.17 902.8V1112.0M1306.25 902.8V1112.0M1326.33 902.8V1112.0M1346.42 902.8V1112.0M1366.50 902.8V1112.0M1386.58 902.8V1112.0M1406.66 902.8V1112.0M1426.74 902.8V1112.0M1446.83 902.8V1112.0M1466.91 902.8V1112.0M1486.99 902.8V1112.0M1507.07 902.8V1112.0M1527.15 902.8V1112.0M1547.24 902.8V1112.0M1567.32 902.8V1112.0M1587.40 902.8V1112.0M1607.48 902.8V1112.0M81.25 902.80H1616.75M81.25 930.80H1616.75M81.25 972.60H1616.75M81.25 1014.60H1616.75M81.25 1056.80H1616.75M81.25 1099.00H1616.75M81.25 1112.00H1616.75"/>
<clipPath id="cpc3"><path d="M81.2 1014.0C85.6 1013.9 96.6 1013.3 102.5 1013.5C108.4 1013.7 107.4 1016.9 110.0 1015.0C112.6 1013.1 113.2 1009.8 115.0 1004.5C116.8 999.2 116.9 993.5 118.8 989.5C120.6 985.5 121.2 985.7 123.8 985.0C126.3 984.3 128.4 987.9 131.2 986.0C134.1 984.1 135.2 978.7 137.5 975.8C139.8 972.8 139.9 972.2 142.5 971.5C145.1 970.8 146.9 974.6 150.0 972.5C153.1 970.4 154.7 964.6 157.5 961.5C160.3 958.4 160.1 958.2 163.8 957.5C167.4 956.8 169.3 958.1 175.0 958.2C180.7 958.4 186.6 958.5 191.2 958.2C195.9 956.2 194.9 951.3 197.5 948.2C200.1 945.2 200.7 944.4 203.8 943.5C206.8 942.6 204.0 943.9 212.5 944.0C221.0 944.1 237.0 943.9 245.0 944.0C251.2 944.1 248.7 946.5 251.2 944.5C253.8 942.5 255.2 937.6 257.5 934.5C259.8 931.4 259.9 930.5 262.5 929.5C265.1 928.5 262.5 929.5 270.0 929.5C283.9 929.5 316.6 929.2 330.0 929.5C335.0 930.5 332.9 931.9 335.0 934.5C337.1 937.1 337.9 939.9 340.0 942.0C342.1 944.1 341.4 944.1 345.0 944.5C348.6 944.9 352.1 944.3 357.5 944.0C362.9 943.7 367.4 941.3 371.2 943.0C375.1 944.7 374.2 947.0 376.2 952.0C378.3 957.0 379.4 962.8 381.2 967.0C383.1 971.2 382.9 971.6 385.0 972.5C387.1 973.4 388.4 969.5 391.2 971.5C394.1 973.5 396.2 978.9 398.8 982.0C401.3 985.1 401.2 985.8 403.8 986.5C406.3 987.2 408.1 983.8 411.2 985.5C414.4 987.2 416.2 991.5 418.8 994.5C421.3 997.5 421.2 999.0 423.8 1000.0C426.3 1001.0 428.1 997.6 431.2 999.5C434.4 1001.4 435.9 1005.9 438.8 1009.0C441.6 1012.1 442.7 1013.4 445.0 1014.5C447.3 1015.6 447.7 1015.8 450.0 1014.5C452.3 1013.2 453.7 1011.2 456.2 1008.2C458.8 1005.3 459.7 1001.9 462.5 1000.0C465.3 998.1 467.4 998.3 470.0 999.0C472.6 999.7 472.7 1000.5 475.0 1003.2C477.3 1006.0 478.9 1010.2 481.2 1012.5C483.6 1014.8 483.4 1014.3 486.2 1014.5C489.1 1014.7 487.0 1013.7 495.0 1013.5C503.0 1013.3 517.2 1013.6 525.0 1013.5C532.5 1013.4 529.7 1011.8 532.5 1013.0C535.3 1014.2 536.2 1016.3 538.8 1019.5C541.3 1022.7 542.4 1026.6 545.0 1028.2C547.6 1029.9 548.7 1026.5 551.2 1027.5C553.8 1028.5 554.9 1030.4 557.5 1033.2C560.1 1036.1 561.2 1039.4 563.8 1041.5C566.3 1043.6 567.7 1043.9 570.0 1043.2C572.3 1042.6 572.9 1042.6 575.0 1038.2C577.1 1033.9 577.9 1027.0 580.0 1022.0C582.1 1017.0 582.4 1015.8 585.0 1014.0C587.6 1012.2 587.6 1013.6 592.5 1013.5C597.4 1013.4 604.4 1013.4 608.8 1013.5C613.1 1013.6 611.4 1012.0 613.8 1014.0C616.1 1016.0 617.4 1020.1 620.0 1023.2C622.6 1026.3 623.7 1028.0 626.2 1029.0C628.8 1030.0 629.9 1030.0 632.5 1028.2C635.1 1026.5 636.4 1023.6 638.8 1020.8C641.1 1017.9 641.4 1016.0 643.8 1014.5C646.1 1013.0 643.8 1013.7 650.0 1013.5C658.5 1013.3 676.2 1013.3 685.0 1013.5C692.5 1013.7 690.2 1017.4 692.5 1014.5C694.8 1011.6 695.0 1007.8 696.2 999.5C697.5 991.2 697.5 982.9 698.8 974.5C700.0 966.1 700.7 962.9 702.5 959.0C704.3 955.1 705.2 955.9 707.5 955.8C709.8 955.6 711.2 955.9 713.8 958.2C716.3 960.6 717.4 964.1 720.0 967.0C722.6 969.9 723.7 971.6 726.2 972.5C728.8 973.4 729.9 973.4 732.5 971.5C735.1 969.6 736.4 966.0 738.8 963.2C741.1 960.5 740.9 959.3 743.8 958.2C746.6 957.2 749.1 960.3 752.5 958.2C755.9 956.2 757.2 951.3 760.0 948.2C762.8 945.2 763.1 944.4 766.2 943.5C769.4 942.6 769.8 944.1 775.0 944.0C780.2 943.9 786.9 942.7 791.2 943.0C795.6 943.6 794.2 944.6 796.2 947.0C798.3 949.4 799.2 952.2 801.2 954.5C803.3 956.8 802.4 957.5 806.2 958.2C810.1 959.0 812.0 958.1 820.0 958.0C828.0 957.9 838.3 957.9 845.0 958.0C851.7 958.1 849.9 960.3 852.5 958.5C855.1 956.7 856.0 954.5 857.5 949.5C859.0 944.5 858.5 938.9 860.0 934.5C861.5 930.1 862.4 929.7 865.0 928.2C867.6 926.8 870.2 925.7 872.5 927.5C874.8 929.3 874.8 927.8 876.2 937.0C877.7 946.2 878.1 959.6 879.5 972.0C880.9 984.4 881.6 991.1 883.0 997.0C884.4 1002.9 884.0 1000.2 886.2 1000.8C888.5 1001.3 890.9 998.1 893.8 999.5C896.6 1000.9 897.7 1004.5 900.0 1007.5C902.3 1010.5 902.4 1012.8 905.0 1014.0C907.6 1015.2 909.9 1011.6 912.5 1013.2C915.1 1014.9 915.4 1016.8 917.5 1022.0C919.6 1027.2 920.7 1034.0 922.5 1038.2C924.3 1042.5 923.7 1041.8 926.2 1042.5C928.8 1043.2 929.8 1041.9 935.0 1041.5C940.2 1041.1 946.6 1040.5 951.2 1040.8C955.9 1041.9 954.9 1044.1 957.5 1047.0C960.1 1049.9 960.6 1053.3 963.8 1055.0C966.9 1056.7 969.1 1053.0 972.5 1055.0C975.9 1057.0 977.2 1061.4 980.0 1064.5C982.8 1067.6 983.4 1069.1 986.2 1070.0C989.1 1070.9 990.6 1067.0 993.8 1069.0C996.9 1071.0 998.7 1076.3 1001.2 1079.5C1003.8 1082.7 1003.4 1083.6 1006.2 1084.5C1009.1 1085.4 1009.6 1084.0 1015.0 1084.0C1020.4 1084.0 1027.6 1084.8 1032.5 1084.5C1037.4 1083.6 1036.4 1082.3 1038.8 1079.5C1041.1 1076.7 1041.7 1072.9 1043.8 1070.8C1045.8 1068.6 1045.4 1069.2 1048.8 1069.0C1052.1 1068.8 1052.5 1069.8 1060.0 1070.0C1067.5 1070.2 1078.3 1070.3 1085.0 1070.0C1091.7 1069.7 1089.9 1067.1 1092.5 1068.5C1095.1 1069.9 1095.7 1072.7 1097.5 1077.0C1099.3 1081.3 1099.7 1085.6 1101.2 1089.5C1102.8 1093.4 1102.7 1094.1 1105.0 1095.8C1107.3 1097.4 1109.7 1098.5 1112.5 1097.5C1115.3 1096.5 1116.2 1093.5 1118.8 1090.8C1121.3 1088.0 1122.7 1085.7 1125.0 1084.0C1127.3 1082.3 1125.9 1082.5 1130.0 1082.5C1134.1 1082.5 1140.3 1083.6 1145.0 1084.0C1149.7 1084.4 1149.9 1085.7 1152.5 1084.5C1155.1 1083.3 1155.4 1082.9 1157.5 1078.2C1159.6 1073.6 1160.7 1066.7 1162.5 1062.0C1164.3 1057.3 1164.2 1056.9 1166.2 1055.8C1168.3 1054.6 1170.2 1058.3 1172.5 1056.5C1174.8 1054.7 1175.8 1055.2 1177.5 1047.0C1179.2 1038.8 1179.2 1026.3 1180.5 1017.0C1181.8 1007.7 1182.0 1006.1 1183.8 1002.0C1185.5 997.9 1186.4 997.5 1188.8 997.0C1191.1 996.5 1192.2 996.9 1195.0 999.5C1197.8 1002.1 1199.4 1006.3 1202.5 1009.5C1205.6 1012.7 1207.2 1014.5 1210.0 1015.0C1212.8 1015.5 1213.9 1016.0 1216.2 1012.0C1218.6 1008.0 1219.2 1001.2 1221.2 995.8C1223.3 990.3 1223.7 987.7 1226.2 985.8C1228.8 983.8 1231.2 988.3 1233.8 986.5C1236.3 984.7 1236.9 981.8 1238.8 977.0C1240.6 972.2 1240.7 967.5 1242.5 963.2C1244.3 959.0 1245.2 957.9 1247.5 956.5C1249.8 955.1 1251.2 955.1 1253.8 956.5C1256.3 957.9 1257.4 960.1 1260.0 963.2C1262.6 966.4 1263.7 969.6 1266.2 971.5C1268.8 973.4 1269.9 973.5 1272.5 972.5C1275.1 971.5 1276.2 969.4 1278.8 966.5C1281.3 963.6 1281.9 960.1 1285.0 958.2C1288.1 956.4 1290.9 959.8 1293.8 957.5C1296.6 955.2 1296.7 952.3 1298.8 947.0C1300.8 941.7 1301.7 936.0 1303.8 932.0C1305.8 928.0 1306.4 928.1 1308.8 927.5C1311.1 926.9 1312.4 926.8 1315.0 929.0C1317.6 931.2 1318.7 935.1 1321.2 938.2C1323.8 941.4 1324.7 942.8 1327.5 944.0C1330.3 945.2 1327.5 944.0 1335.0 944.0C1352.0 944.0 1393.2 944.2 1410.0 944.0C1416.2 943.8 1413.9 945.2 1416.2 943.2C1418.6 941.3 1419.2 937.3 1421.2 934.5C1423.3 931.7 1423.4 930.5 1426.2 929.5C1429.1 928.5 1429.6 929.6 1435.0 929.5C1440.4 929.4 1447.6 928.7 1452.5 929.0C1457.4 929.8 1456.2 930.7 1458.8 933.2C1461.3 935.8 1462.4 939.1 1465.0 941.5C1467.6 943.9 1468.7 944.9 1471.2 945.0C1473.8 945.1 1475.2 944.4 1477.5 942.0C1479.8 939.6 1480.4 935.8 1482.5 933.2C1484.6 930.7 1484.4 930.3 1487.5 929.5C1490.6 928.7 1487.5 929.5 1497.5 929.5C1514.0 929.5 1551.5 929.6 1567.5 929.5C1575.0 929.4 1572.2 930.8 1575.0 929.0C1577.8 927.2 1578.9 923.5 1581.2 920.8C1583.6 918.0 1583.4 916.6 1586.2 915.8C1589.1 914.9 1592.2 914.7 1595.0 916.5C1597.8 918.3 1597.9 919.7 1600.0 924.5C1602.1 929.3 1603.2 935.4 1605.0 939.5C1606.8 943.6 1606.3 943.7 1608.8 944.5C1611.2 945.3 1615.1 943.5 1616.8 943.2L1616.75 1112.0L81.25 1112.0Z"/></clipPath>
<path d="M81.2 1014.0C85.6 1013.9 96.6 1013.3 102.5 1013.5C108.4 1013.7 107.4 1016.9 110.0 1015.0C112.6 1013.1 113.2 1009.8 115.0 1004.5C116.8 999.2 116.9 993.5 118.8 989.5C120.6 985.5 121.2 985.7 123.8 985.0C126.3 984.3 128.4 987.9 131.2 986.0C134.1 984.1 135.2 978.7 137.5 975.8C139.8 972.8 139.9 972.2 142.5 971.5C145.1 970.8 146.9 974.6 150.0 972.5C153.1 970.4 154.7 964.6 157.5 961.5C160.3 958.4 160.1 958.2 163.8 957.5C167.4 956.8 169.3 958.1 175.0 958.2C180.7 958.4 186.6 958.5 191.2 958.2C195.9 956.2 194.9 951.3 197.5 948.2C200.1 945.2 200.7 944.4 203.8 943.5C206.8 942.6 204.0 943.9 212.5 944.0C221.0 944.1 237.0 943.9 245.0 944.0C251.2 944.1 248.7 946.5 251.2 944.5C253.8 942.5 255.2 937.6 257.5 934.5C259.8 931.4 259.9 930.5 262.5 929.5C265.1 928.5 262.5 929.5 270.0 929.5C283.9 929.5 316.6 929.2 330.0 929.5C335.0 930.5 332.9 931.9 335.0 934.5C337.1 937.1 337.9 939.9 340.0 942.0C342.1 944.1 341.4 944.1 345.0 944.5C348.6 944.9 352.1 944.3 357.5 944.0C362.9 943.7 367.4 941.3 371.2 943.0C375.1 944.7 374.2 947.0 376.2 952.0C378.3 957.0 379.4 962.8 381.2 967.0C383.1 971.2 382.9 971.6 385.0 972.5C387.1 973.4 388.4 969.5 391.2 971.5C394.1 973.5 396.2 978.9 398.8 982.0C401.3 985.1 401.2 985.8 403.8 986.5C406.3 987.2 408.1 983.8 411.2 985.5C414.4 987.2 416.2 991.5 418.8 994.5C421.3 997.5 421.2 999.0 423.8 1000.0C426.3 1001.0 428.1 997.6 431.2 999.5C434.4 1001.4 435.9 1005.9 438.8 1009.0C441.6 1012.1 442.7 1013.4 445.0 1014.5C447.3 1015.6 447.7 1015.8 450.0 1014.5C452.3 1013.2 453.7 1011.2 456.2 1008.2C458.8 1005.3 459.7 1001.9 462.5 1000.0C465.3 998.1 467.4 998.3 470.0 999.0C472.6 999.7 472.7 1000.5 475.0 1003.2C477.3 1006.0 478.9 1010.2 481.2 1012.5C483.6 1014.8 483.4 1014.3 486.2 1014.5C489.1 1014.7 487.0 1013.7 495.0 1013.5C503.0 1013.3 517.2 1013.6 525.0 1013.5C532.5 1013.4 529.7 1011.8 532.5 1013.0C535.3 1014.2 536.2 1016.3 538.8 1019.5C541.3 1022.7 542.4 1026.6 545.0 1028.2C547.6 1029.9 548.7 1026.5 551.2 1027.5C553.8 1028.5 554.9 1030.4 557.5 1033.2C560.1 1036.1 561.2 1039.4 563.8 1041.5C566.3 1043.6 567.7 1043.9 570.0 1043.2C572.3 1042.6 572.9 1042.6 575.0 1038.2C577.1 1033.9 577.9 1027.0 580.0 1022.0C582.1 1017.0 582.4 1015.8 585.0 1014.0C587.6 1012.2 587.6 1013.6 592.5 1013.5C597.4 1013.4 604.4 1013.4 608.8 1013.5C613.1 1013.6 611.4 1012.0 613.8 1014.0C616.1 1016.0 617.4 1020.1 620.0 1023.2C622.6 1026.3 623.7 1028.0 626.2 1029.0C628.8 1030.0 629.9 1030.0 632.5 1028.2C635.1 1026.5 636.4 1023.6 638.8 1020.8C641.1 1017.9 641.4 1016.0 643.8 1014.5C646.1 1013.0 643.8 1013.7 650.0 1013.5C658.5 1013.3 676.2 1013.3 685.0 1013.5C692.5 1013.7 690.2 1017.4 692.5 1014.5C694.8 1011.6 695.0 1007.8 696.2 999.5C697.5 991.2 697.5 982.9 698.8 974.5C700.0 966.1 700.7 962.9 702.5 959.0C704.3 955.1 705.2 955.9 707.5 955.8C709.8 955.6 711.2 955.9 713.8 958.2C716.3 960.6 717.4 964.1 720.0 967.0C722.6 969.9 723.7 971.6 726.2 972.5C728.8 973.4 729.9 973.4 732.5 971.5C735.1 969.6 736.4 966.0 738.8 963.2C741.1 960.5 740.9 959.3 743.8 958.2C746.6 957.2 749.1 960.3 752.5 958.2C755.9 956.2 757.2 951.3 760.0 948.2C762.8 945.2 763.1 944.4 766.2 943.5C769.4 942.6 769.8 944.1 775.0 944.0C780.2 943.9 786.9 942.7 791.2 943.0C795.6 943.6 794.2 944.6 796.2 947.0C798.3 949.4 799.2 952.2 801.2 954.5C803.3 956.8 802.4 957.5 806.2 958.2C810.1 959.0 812.0 958.1 820.0 958.0C828.0 957.9 838.3 957.9 845.0 958.0C851.7 958.1 849.9 960.3 852.5 958.5C855.1 956.7 856.0 954.5 857.5 949.5C859.0 944.5 858.5 938.9 860.0 934.5C861.5 930.1 862.4 929.7 865.0 928.2C867.6 926.8 870.2 925.7 872.5 927.5C874.8 929.3 874.8 927.8 876.2 937.0C877.7 946.2 878.1 959.6 879.5 972.0C880.9 984.4 881.6 991.1 883.0 997.0C884.4 1002.9 884.0 1000.2 886.2 1000.8C888.5 1001.3 890.9 998.1 893.8 999.5C896.6 1000.9 897.7 1004.5 900.0 1007.5C902.3 1010.5 902.4 1012.8 905.0 1014.0C907.6 1015.2 909.9 1011.6 912.5 1013.2C915.1 1014.9 915.4 1016.8 917.5 1022.0C919.6 1027.2 920.7 1034.0 922.5 1038.2C924.3 1042.5 923.7 1041.8 926.2 1042.5C928.8 1043.2 929.8 1041.9 935.0 1041.5C940.2 1041.1 946.6 1040.5 951.2 1040.8C955.9 1041.9 954.9 1044.1 957.5 1047.0C960.1 1049.9 960.6 1053.3 963.8 1055.0C966.9 1056.7 969.1 1053.0 972.5 1055.0C975.9 1057.0 977.2 1061.4 980.0 1064.5C982.8 1067.6 983.4 1069.1 986.2 1070.0C989.1 1070.9 990.6 1067.0 993.8 1069.0C996.9 1071.0 998.7 1076.3 1001.2 1079.5C1003.8 1082.7 1003.4 1083.6 1006.2 1084.5C1009.1 1085.4 1009.6 1084.0 1015.0 1084.0C1020.4 1084.0 1027.6 1084.8 1032.5 1084.5C1037.4 1083.6 1036.4 1082.3 1038.8 1079.5C1041.1 1076.7 1041.7 1072.9 1043.8 1070.8C1045.8 1068.6 1045.4 1069.2 1048.8 1069.0C1052.1 1068.8 1052.5 1069.8 1060.0 1070.0C1067.5 1070.2 1078.3 1070.3 1085.0 1070.0C1091.7 1069.7 1089.9 1067.1 1092.5 1068.5C1095.1 1069.9 1095.7 1072.7 1097.5 1077.0C1099.3 1081.3 1099.7 1085.6 1101.2 1089.5C1102.8 1093.4 1102.7 1094.1 1105.0 1095.8C1107.3 1097.4 1109.7 1098.5 1112.5 1097.5C1115.3 1096.5 1116.2 1093.5 1118.8 1090.8C1121.3 1088.0 1122.7 1085.7 1125.0 1084.0C1127.3 1082.3 1125.9 1082.5 1130.0 1082.5C1134.1 1082.5 1140.3 1083.6 1145.0 1084.0C1149.7 1084.4 1149.9 1085.7 1152.5 1084.5C1155.1 1083.3 1155.4 1082.9 1157.5 1078.2C1159.6 1073.6 1160.7 1066.7 1162.5 1062.0C1164.3 1057.3 1164.2 1056.9 1166.2 1055.8C1168.3 1054.6 1170.2 1058.3 1172.5 1056.5C1174.8 1054.7 1175.8 1055.2 1177.5 1047.0C1179.2 1038.8 1179.2 1026.3 1180.5 1017.0C1181.8 1007.7 1182.0 1006.1 1183.8 1002.0C1185.5 997.9 1186.4 997.5 1188.8 997.0C1191.1 996.5 1192.2 996.9 1195.0 999.5C1197.8 1002.1 1199.4 1006.3 1202.5 1009.5C1205.6 1012.7 1207.2 1014.5 1210.0 1015.0C1212.8 1015.5 1213.9 1016.0 1216.2 1012.0C1218.6 1008.0 1219.2 1001.2 1221.2 995.8C1223.3 990.3 1223.7 987.7 1226.2 985.8C1228.8 983.8 1231.2 988.3 1233.8 986.5C1236.3 984.7 1236.9 981.8 1238.8 977.0C1240.6 972.2 1240.7 967.5 1242.5 963.2C1244.3 959.0 1245.2 957.9 1247.5 956.5C1249.8 955.1 1251.2 955.1 1253.8 956.5C1256.3 957.9 1257.4 960.1 1260.0 963.2C1262.6 966.4 1263.7 969.6 1266.2 971.5C1268.8 973.4 1269.9 973.5 1272.5 972.5C1275.1 971.5 1276.2 969.4 1278.8 966.5C1281.3 963.6 1281.9 960.1 1285.0 958.2C1288.1 956.4 1290.9 959.8 1293.8 957.5C1296.6 955.2 1296.7 952.3 1298.8 947.0C1300.8 941.7 1301.7 936.0 1303.8 932.0C1305.8 928.0 1306.4 928.1 1308.8 927.5C1311.1 926.9 1312.4 926.8 1315.0 929.0C1317.6 931.2 1318.7 935.1 1321.2 938.2C1323.8 941.4 1324.7 942.8 1327.5 944.0C1330.3 945.2 1327.5 944.0 1335.0 944.0C1352.0 944.0 1393.2 944.2 1410.0 944.0C1416.2 943.8 1413.9 945.2 1416.2 943.2C1418.6 941.3 1419.2 937.3 1421.2 934.5C1423.3 931.7 1423.4 930.5 1426.2 929.5C1429.1 928.5 1429.6 929.6 1435.0 929.5C1440.4 929.4 1447.6 928.7 1452.5 929.0C1457.4 929.8 1456.2 930.7 1458.8 933.2C1461.3 935.8 1462.4 939.1 1465.0 941.5C1467.6 943.9 1468.7 944.9 1471.2 945.0C1473.8 945.1 1475.2 944.4 1477.5 942.0C1479.8 939.6 1480.4 935.8 1482.5 933.2C1484.6 930.7 1484.4 930.3 1487.5 929.5C1490.6 928.7 1487.5 929.5 1497.5 929.5C1514.0 929.5 1551.5 929.6 1567.5 929.5C1575.0 929.4 1572.2 930.8 1575.0 929.0C1577.8 927.2 1578.9 923.5 1581.2 920.8C1583.6 918.0 1583.4 916.6 1586.2 915.8C1589.1 914.9 1592.2 914.7 1595.0 916.5C1597.8 918.3 1597.9 919.7 1600.0 924.5C1602.1 929.3 1603.2 935.4 1605.0 939.5C1606.8 943.6 1606.3 943.7 1608.8 944.5C1611.2 945.3 1615.1 943.5 1616.8 943.2L1616.75 1112.0L81.25 1112.0Z" fill="url(#gc3)"/>
<path class="grid2" clip-path="url(#cpc3)" d="M81.25 902.8V1112.0M101.33 902.8V1112.0M121.41 902.8V1112.0M141.50 902.8V1112.0M161.58 902.8V1112.0M181.66 902.8V1112.0M201.74 902.8V1112.0M221.82 902.8V1112.0M241.91 902.8V1112.0M261.99 902.8V1112.0M282.07 902.8V1112.0M302.15 902.8V1112.0M322.23 902.8V1112.0M342.32 902.8V1112.0M362.40 902.8V1112.0M382.48 902.8V1112.0M402.56 902.8V1112.0M422.64 902.8V1112.0M442.73 902.8V1112.0M462.81 902.8V1112.0M482.89 902.8V1112.0M502.97 902.8V1112.0M523.05 902.8V1112.0M543.14 902.8V1112.0M563.22 902.8V1112.0M583.30 902.8V1112.0M603.38 902.8V1112.0M623.46 902.8V1112.0M643.55 902.8V1112.0M663.63 902.8V1112.0M683.71 902.8V1112.0M703.79 902.8V1112.0M723.87 902.8V1112.0M743.96 902.8V1112.0M764.04 902.8V1112.0M784.12 902.8V1112.0M804.20 902.8V1112.0M824.28 902.8V1112.0M844.37 902.8V1112.0M864.45 902.8V1112.0M884.53 902.8V1112.0M904.61 902.8V1112.0M924.69 902.8V1112.0M944.78 902.8V1112.0M964.86 902.8V1112.0M984.94 902.8V1112.0M1005.02 902.8V1112.0M1025.10 902.8V1112.0M1045.19 902.8V1112.0M1065.27 902.8V1112.0M1085.35 902.8V1112.0M1105.43 902.8V1112.0M1125.51 902.8V1112.0M1145.60 902.8V1112.0M1165.68 902.8V1112.0M1185.76 902.8V1112.0M1205.84 902.8V1112.0M1225.92 902.8V1112.0M1246.01 902.8V1112.0M1266.09 902.8V1112.0M1286.17 902.8V1112.0M1306.25 902.8V1112.0M1326.33 902.8V1112.0M1346.42 902.8V1112.0M1366.50 902.8V1112.0M1386.58 902.8V1112.0M1406.66 902.8V1112.0M1426.74 902.8V1112.0M1446.83 902.8V1112.0M1466.91 902.8V1112.0M1486.99 902.8V1112.0M1507.07 902.8V1112.0M1527.15 902.8V1112.0M1547.24 902.8V1112.0M1567.32 902.8V1112.0M1587.40 902.8V1112.0M1607.48 902.8V1112.0M81.25 902.80H1616.75M81.25 930.80H1616.75M81.25 972.60H1616.75M81.25 1014.60H1616.75M81.25 1056.80H1616.75M81.25 1099.00H1616.75M81.25 1112.00H1616.75"/>
<path d="M81.2 1014.0C85.6 1013.9 96.6 1013.3 102.5 1013.5C108.4 1013.7 107.4 1016.9 110.0 1015.0C112.6 1013.1 113.2 1009.8 115.0 1004.5C116.8 999.2 116.9 993.5 118.8 989.5C120.6 985.5 121.2 985.7 123.8 985.0C126.3 984.3 128.4 987.9 131.2 986.0C134.1 984.1 135.2 978.7 137.5 975.8C139.8 972.8 139.9 972.2 142.5 971.5C145.1 970.8 146.9 974.6 150.0 972.5C153.1 970.4 154.7 964.6 157.5 961.5C160.3 958.4 160.1 958.2 163.8 957.5C167.4 956.8 169.3 958.1 175.0 958.2C180.7 958.4 186.6 958.5 191.2 958.2C195.9 956.2 194.9 951.3 197.5 948.2C200.1 945.2 200.7 944.4 203.8 943.5C206.8 942.6 204.0 943.9 212.5 944.0C221.0 944.1 237.0 943.9 245.0 944.0C251.2 944.1 248.7 946.5 251.2 944.5C253.8 942.5 255.2 937.6 257.5 934.5C259.8 931.4 259.9 930.5 262.5 929.5C265.1 928.5 262.5 929.5 270.0 929.5C283.9 929.5 316.6 929.2 330.0 929.5C335.0 930.5 332.9 931.9 335.0 934.5C337.1 937.1 337.9 939.9 340.0 942.0C342.1 944.1 341.4 944.1 345.0 944.5C348.6 944.9 352.1 944.3 357.5 944.0C362.9 943.7 367.4 941.3 371.2 943.0C375.1 944.7 374.2 947.0 376.2 952.0C378.3 957.0 379.4 962.8 381.2 967.0C383.1 971.2 382.9 971.6 385.0 972.5C387.1 973.4 388.4 969.5 391.2 971.5C394.1 973.5 396.2 978.9 398.8 982.0C401.3 985.1 401.2 985.8 403.8 986.5C406.3 987.2 408.1 983.8 411.2 985.5C414.4 987.2 416.2 991.5 418.8 994.5C421.3 997.5 421.2 999.0 423.8 1000.0C426.3 1001.0 428.1 997.6 431.2 999.5C434.4 1001.4 435.9 1005.9 438.8 1009.0C441.6 1012.1 442.7 1013.4 445.0 1014.5C447.3 1015.6 447.7 1015.8 450.0 1014.5C452.3 1013.2 453.7 1011.2 456.2 1008.2C458.8 1005.3 459.7 1001.9 462.5 1000.0C465.3 998.1 467.4 998.3 470.0 999.0C472.6 999.7 472.7 1000.5 475.0 1003.2C477.3 1006.0 478.9 1010.2 481.2 1012.5C483.6 1014.8 483.4 1014.3 486.2 1014.5C489.1 1014.7 487.0 1013.7 495.0 1013.5C503.0 1013.3 517.2 1013.6 525.0 1013.5C532.5 1013.4 529.7 1011.8 532.5 1013.0C535.3 1014.2 536.2 1016.3 538.8 1019.5C541.3 1022.7 542.4 1026.6 545.0 1028.2C547.6 1029.9 548.7 1026.5 551.2 1027.5C553.8 1028.5 554.9 1030.4 557.5 1033.2C560.1 1036.1 561.2 1039.4 563.8 1041.5C566.3 1043.6 567.7 1043.9 570.0 1043.2C572.3 1042.6 572.9 1042.6 575.0 1038.2C577.1 1033.9 577.9 1027.0 580.0 1022.0C582.1 1017.0 582.4 1015.8 585.0 1014.0C587.6 1012.2 587.6 1013.6 592.5 1013.5C597.4 1013.4 604.4 1013.4 608.8 1013.5C613.1 1013.6 611.4 1012.0 613.8 1014.0C616.1 1016.0 617.4 1020.1 620.0 1023.2C622.6 1026.3 623.7 1028.0 626.2 1029.0C628.8 1030.0 629.9 1030.0 632.5 1028.2C635.1 1026.5 636.4 1023.6 638.8 1020.8C641.1 1017.9 641.4 1016.0 643.8 1014.5C646.1 1013.0 643.8 1013.7 650.0 1013.5C658.5 1013.3 676.2 1013.3 685.0 1013.5C692.5 1013.7 690.2 1017.4 692.5 1014.5C694.8 1011.6 695.0 1007.8 696.2 999.5C697.5 991.2 697.5 982.9 698.8 974.5C700.0 966.1 700.7 962.9 702.5 959.0C704.3 955.1 705.2 955.9 707.5 955.8C709.8 955.6 711.2 955.9 713.8 958.2C716.3 960.6 717.4 964.1 720.0 967.0C722.6 969.9 723.7 971.6 726.2 972.5C728.8 973.4 729.9 973.4 732.5 971.5C735.1 969.6 736.4 966.0 738.8 963.2C741.1 960.5 740.9 959.3 743.8 958.2C746.6 957.2 749.1 960.3 752.5 958.2C755.9 956.2 757.2 951.3 760.0 948.2C762.8 945.2 763.1 944.4 766.2 943.5C769.4 942.6 769.8 944.1 775.0 944.0C780.2 943.9 786.9 942.7 791.2 943.0C795.6 943.6 794.2 944.6 796.2 947.0C798.3 949.4 799.2 952.2 801.2 954.5C803.3 956.8 802.4 957.5 806.2 958.2C810.1 959.0 812.0 958.1 820.0 958.0C828.0 957.9 838.3 957.9 845.0 958.0C851.7 958.1 849.9 960.3 852.5 958.5C855.1 956.7 856.0 954.5 857.5 949.5C859.0 944.5 858.5 938.9 860.0 934.5C861.5 930.1 862.4 929.7 865.0 928.2C867.6 926.8 870.2 925.7 872.5 927.5C874.8 929.3 874.8 927.8 876.2 937.0C877.7 946.2 878.1 959.6 879.5 972.0C880.9 984.4 881.6 991.1 883.0 997.0C884.4 1002.9 884.0 1000.2 886.2 1000.8C888.5 1001.3 890.9 998.1 893.8 999.5C896.6 1000.9 897.7 1004.5 900.0 1007.5C902.3 1010.5 902.4 1012.8 905.0 1014.0C907.6 1015.2 909.9 1011.6 912.5 1013.2C915.1 1014.9 915.4 1016.8 917.5 1022.0C919.6 1027.2 920.7 1034.0 922.5 1038.2C924.3 1042.5 923.7 1041.8 926.2 1042.5C928.8 1043.2 929.8 1041.9 935.0 1041.5C940.2 1041.1 946.6 1040.5 951.2 1040.8C955.9 1041.9 954.9 1044.1 957.5 1047.0C960.1 1049.9 960.6 1053.3 963.8 1055.0C966.9 1056.7 969.1 1053.0 972.5 1055.0C975.9 1057.0 977.2 1061.4 980.0 1064.5C982.8 1067.6 983.4 1069.1 986.2 1070.0C989.1 1070.9 990.6 1067.0 993.8 1069.0C996.9 1071.0 998.7 1076.3 1001.2 1079.5C1003.8 1082.7 1003.4 1083.6 1006.2 1084.5C1009.1 1085.4 1009.6 1084.0 1015.0 1084.0C1020.4 1084.0 1027.6 1084.8 1032.5 1084.5C1037.4 1083.6 1036.4 1082.3 1038.8 1079.5C1041.1 1076.7 1041.7 1072.9 1043.8 1070.8C1045.8 1068.6 1045.4 1069.2 1048.8 1069.0C1052.1 1068.8 1052.5 1069.8 1060.0 1070.0C1067.5 1070.2 1078.3 1070.3 1085.0 1070.0C1091.7 1069.7 1089.9 1067.1 1092.5 1068.5C1095.1 1069.9 1095.7 1072.7 1097.5 1077.0C1099.3 1081.3 1099.7 1085.6 1101.2 1089.5C1102.8 1093.4 1102.7 1094.1 1105.0 1095.8C1107.3 1097.4 1109.7 1098.5 1112.5 1097.5C1115.3 1096.5 1116.2 1093.5 1118.8 1090.8C1121.3 1088.0 1122.7 1085.7 1125.0 1084.0C1127.3 1082.3 1125.9 1082.5 1130.0 1082.5C1134.1 1082.5 1140.3 1083.6 1145.0 1084.0C1149.7 1084.4 1149.9 1085.7 1152.5 1084.5C1155.1 1083.3 1155.4 1082.9 1157.5 1078.2C1159.6 1073.6 1160.7 1066.7 1162.5 1062.0C1164.3 1057.3 1164.2 1056.9 1166.2 1055.8C1168.3 1054.6 1170.2 1058.3 1172.5 1056.5C1174.8 1054.7 1175.8 1055.2 1177.5 1047.0C1179.2 1038.8 1179.2 1026.3 1180.5 1017.0C1181.8 1007.7 1182.0 1006.1 1183.8 1002.0C1185.5 997.9 1186.4 997.5 1188.8 997.0C1191.1 996.5 1192.2 996.9 1195.0 999.5C1197.8 1002.1 1199.4 1006.3 1202.5 1009.5C1205.6 1012.7 1207.2 1014.5 1210.0 1015.0C1212.8 1015.5 1213.9 1016.0 1216.2 1012.0C1218.6 1008.0 1219.2 1001.2 1221.2 995.8C1223.3 990.3 1223.7 987.7 1226.2 985.8C1228.8 983.8 1231.2 988.3 1233.8 986.5C1236.3 984.7 1236.9 981.8 1238.8 977.0C1240.6 972.2 1240.7 967.5 1242.5 963.2C1244.3 959.0 1245.2 957.9 1247.5 956.5C1249.8 955.1 1251.2 955.1 1253.8 956.5C1256.3 957.9 1257.4 960.1 1260.0 963.2C1262.6 966.4 1263.7 969.6 1266.2 971.5C1268.8 973.4 1269.9 973.5 1272.5 972.5C1275.1 971.5 1276.2 969.4 1278.8 966.5C1281.3 963.6 1281.9 960.1 1285.0 958.2C1288.1 956.4 1290.9 959.8 1293.8 957.5C1296.6 955.2 1296.7 952.3 1298.8 947.0C1300.8 941.7 1301.7 936.0 1303.8 932.0C1305.8 928.0 1306.4 928.1 1308.8 927.5C1311.1 926.9 1312.4 926.8 1315.0 929.0C1317.6 931.2 1318.7 935.1 1321.2 938.2C1323.8 941.4 1324.7 942.8 1327.5 944.0C1330.3 945.2 1327.5 944.0 1335.0 944.0C1352.0 944.0 1393.2 944.2 1410.0 944.0C1416.2 943.8 1413.9 945.2 1416.2 943.2C1418.6 941.3 1419.2 937.3 1421.2 934.5C1423.3 931.7 1423.4 930.5 1426.2 929.5C1429.1 928.5 1429.6 929.6 1435.0 929.5C1440.4 929.4 1447.6 928.7 1452.5 929.0C1457.4 929.8 1456.2 930.7 1458.8 933.2C1461.3 935.8 1462.4 939.1 1465.0 941.5C1467.6 943.9 1468.7 944.9 1471.2 945.0C1473.8 945.1 1475.2 944.4 1477.5 942.0C1479.8 939.6 1480.4 935.8 1482.5 933.2C1484.6 930.7 1484.4 930.3 1487.5 929.5C1490.6 928.7 1487.5 929.5 1497.5 929.5C1514.0 929.5 1551.5 929.6 1567.5 929.5C1575.0 929.4 1572.2 930.8 1575.0 929.0C1577.8 927.2 1578.9 923.5 1581.2 920.8C1583.6 918.0 1583.4 916.6 1586.2 915.8C1589.1 914.9 1592.2 914.7 1595.0 916.5C1597.8 918.3 1597.9 919.7 1600.0 924.5C1602.1 929.3 1603.2 935.4 1605.0 939.5C1606.8 943.6 1606.3 943.7 1608.8 944.5C1611.2 945.3 1615.1 943.5 1616.8 943.2" fill="none" stroke="#4fc95c" stroke-width="3.6" stroke-linejoin="round" stroke-linecap="butt"/>
<path class="dash" stroke-opacity=".92" stroke="#1b86dc" d="M1634 916.2H1595.3"/>
<path class="dash" style="stroke-width:1.8" stroke="#86d48d" d="M1590 986.0H96"/>
<path class="dash" stroke-opacity=".85" stroke="#d2b24a" d="M1634 1098.0H1113.5"/>
<path transform="translate(1617 985.2)" d="M0 0L-29.5 -10L-21 0L-29.5 10Z" fill="#41b84c"/>
<circle cx="1586.3" cy="916.2" r="7.2" fill="#0f99f7"/>
<circle cx="1104.5" cy="1097.6" r="7.2" fill="#cd9a2d"/>
<circle cx="81.5" cy="985.5" r="7.2" fill="#4cc153"/>
<text class="vl" x="1644" y="921.2" fill="#1a8be2">73</text>
<text class="vl" x="1626.5" y="990.4" fill="#46ad50">68.04</text>
<text class="vl" x="1644" y="1101.8" fill="#c9a12f">60</text>
</g>
<text class="dl" x="83" y="1141">2021-03-27 14:28</text>
<text class="dl" x="1618" y="1141" text-anchor="end">2021-03-27 14:51</text>
</svg>
</body>
</html>
